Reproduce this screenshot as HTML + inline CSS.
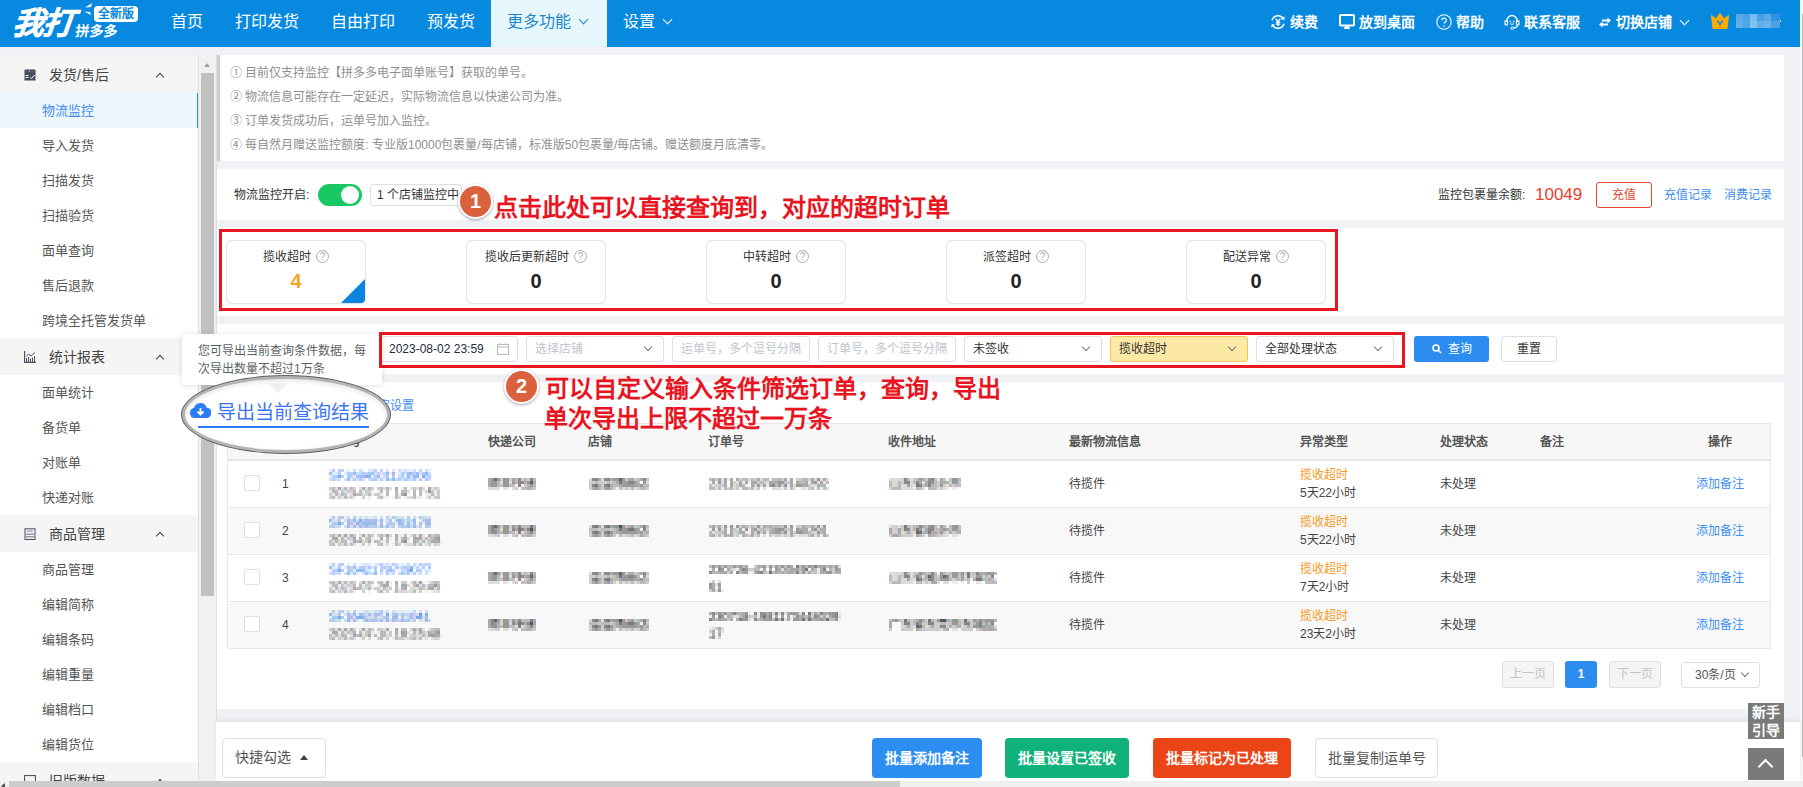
<!DOCTYPE html>
<html lang="zh-CN">
<head>
<meta charset="utf-8">
<style>
*{box-sizing:border-box;margin:0;padding:0}
html,body{width:1803px;height:787px;overflow:hidden}
body{position:relative;background:#eff1f4;font-family:"Liberation Sans",sans-serif;color:#333;font-size:13px;line-height:1}
.a{position:absolute}
.hdr{left:0;top:0;width:1800px;height:47px;background:#0689df}
.nav{top:0;height:47px;line-height:44px;color:#fff;font-size:16px;white-space:nowrap}
.nav.on{background:#e5f7fd;color:#1f86cc}
.chev{display:inline-block;width:7px;height:7px;border-right:1.7px solid currentColor;border-bottom:1.7px solid currentColor;transform:rotate(45deg);position:relative;top:-4px;margin-left:9px}
.rt{top:0;height:47px;line-height:44px;color:#fff;font-size:14px;font-weight:bold;white-space:nowrap}
.side{left:0;top:56px;width:199px;height:725px;background:#fff;overflow:hidden}
.sec{position:absolute;left:0;width:198px;height:37px;background:#f5f5f5;font-size:14px;color:#444;line-height:37px}
.sec .t{position:absolute;left:49px;top:1px}
.sec .up{position:absolute;left:157px;top:18px;width:6px;height:6px;border-left:1.5px solid #444;border-top:1.5px solid #444;transform:rotate(45deg)}
.sec .ic{position:absolute;left:24px;top:13px;width:12px;height:12px}
.it{position:absolute;left:0;width:198px;height:35px;line-height:35px;font-size:13px;color:#555;padding-left:42px}
.it.on{background:#eef7fe;color:#3d8ef0;width:199px;border-right:2px solid #2d8cf0}
.note{left:217px;top:55px;width:1567px;height:106px;background:#fff;border-left:3px solid #cdcdcd}
.note div{position:absolute;left:10px;font-size:12px;color:#8f8f8f;white-space:nowrap;line-height:18px}
.panel{left:217px;background:#fff;width:1567px}
.red{border:3px solid #e8161f}
.card{position:absolute;top:240px;width:140px;height:64px;border:1px solid #e4e4e4;border-radius:5px;background:#fff;overflow:hidden}
.card .tt{position:absolute;left:0;width:100%;top:8px;text-align:center;font-size:12px;color:#333;line-height:16px}
.q{display:inline-block;width:13px;height:13px;border:1px solid #a8adb5;border-radius:50%;font-size:10px;line-height:11px;text-align:center;color:#a8adb5;vertical-align:0px;margin-left:5px;position:relative;top:-1px}
.card .num{position:absolute;left:0;width:100%;top:30px;text-align:center;font-size:20px;font-weight:bold;color:#222;line-height:20px}
.inp{position:absolute;top:336px;width:138px;height:26px;border:1px solid #dcdfe6;border-radius:3px;background:#fff;font-size:12px;line-height:25px;padding-left:8px;color:#333;white-space:nowrap;overflow:hidden}
.inp.ph{color:#c0c4cc}
.dd{position:absolute;right:12px;top:7px;width:6px;height:6px;border-right:1.3px solid #777;border-bottom:1.3px solid #777;transform:rotate(45deg)}
.badge{position:absolute;width:35px;height:35px;border-radius:50%;background:#d9623c;border:2px solid #fff;box-shadow:0 1px 3px rgba(0,0,0,.35);color:#fff;font-weight:bold;font-size:20px;text-align:center;line-height:31px}
.ann{position:absolute;color:#e8151f;font-weight:bold;font-size:24px;white-space:nowrap;line-height:30px}
.th{position:absolute;top:434px;font-size:12px;font-weight:bold;color:#555;line-height:16px;white-space:nowrap}
.row{position:absolute;left:227px;width:1544px;height:47px;border-top:1px solid #e8e8e8}
.cell{position:absolute;font-size:12px;color:#444;line-height:16px;white-space:nowrap}
.blur{filter:blur(0.9px);opacity:.9}
.btn{position:absolute;top:738px;height:40px;border-radius:4px;color:#fff;font-size:14px;font-weight:bold;text-align:center;line-height:40px;white-space:nowrap}
</style>
</head>
<body>
<!-- header -->
<div class="a hdr"></div>
<div class="a" style="left:1800px;top:0;width:3px;height:787px;background:#fafafa"></div>
<div class="a" style="left:1802px;top:14px;width:1px;height:743px;background:#b8b8b8"></div>
<!-- logo -->
<div class="a" style="left:13px;top:8px;font-size:31px;font-weight:900;font-style:italic;color:#fff;line-height:32px;letter-spacing:-1px;transform:skewX(-6deg);-webkit-text-stroke:0.7px #fff">我打</div>
<div class="a" style="left:75px;top:24px;font-size:14px;font-weight:900;color:#fff;line-height:15px;transform:skewX(-6deg)">拼多多</div>
<svg class="a" style="left:83px;top:3px" width="9" height="13" viewBox="0 0 9 13"><path d="M9 0L2 4.5 8 4z" fill="#fff"/><path d="M1 8.5l7 3.5-1-3z" fill="#fff"/></svg>
<div class="a" style="left:94px;top:6px;width:44px;height:16px;background:#fff;border-radius:4px;color:#0689df;font-size:12px;font-weight:bold;line-height:16px;text-align:center">全新版</div>

<div class="a nav" style="left:155px;width:64px;text-align:center">首页</div>
<div class="a nav" style="left:219px;width:96px;text-align:center">打印发货</div>
<div class="a nav" style="left:315px;width:96px;text-align:center">自由打印</div>
<div class="a nav" style="left:411px;width:80px;text-align:center">预发货</div>
<div class="a nav on" style="left:491px;width:116px;padding-left:16px">更多功能<span class="chev"></span></div>
<div class="a nav" style="left:607px;width:90px;padding-left:16px">设置<span class="chev"></span></div>

<div class="a rt" style="left:1270px">
<svg width="16" height="16" viewBox="0 0 16 16" style="vertical-align:-3px"><path d="M2 6.2A6.3 6.3 0 0 1 13.6 5" fill="none" stroke="#fff" stroke-width="1.5"/><path d="M14 9.8A6.3 6.3 0 0 1 2.4 11" fill="none" stroke="#fff" stroke-width="1.5"/><path d="M14.8 2.6l-0.6 3.6-3.4-1.2z" fill="#fff"/><path d="M1.2 13.4l0.6-3.6 3.4 1.2z" fill="#fff"/><path d="M5.6 4.6L8 7.6 10.4 4.6M8 7.6V12M5.8 8.3h4.4M5.8 10.2h4.4" fill="none" stroke="#fff" stroke-width="1.3"/></svg> 续费</div>
<div class="a rt" style="left:1339px">
<svg width="16" height="16" viewBox="0 0 16 16" style="vertical-align:-3px"><rect x="1" y="1" width="14" height="10.5" rx="1" fill="none" stroke="#fff" stroke-width="2"/><path d="M6 12h4l1 3H5z" fill="#fff"/></svg> 放到桌面</div>
<div class="a rt" style="left:1436px">
<svg width="16" height="16" viewBox="0 0 16 16" style="vertical-align:-3px"><circle cx="8" cy="8" r="7.2" fill="none" stroke="#fff" stroke-width="1.1"/><path d="M5.8 6.2a2.2 2.2 0 1 1 3.2 2c-0.7 0.4-1 0.8-1 1.6" fill="none" stroke="#fff" stroke-width="1.2"/><circle cx="8" cy="12" r="0.8" fill="#fff"/></svg> 帮助</div>
<div class="a rt" style="left:1504px">
<svg width="16" height="16" viewBox="0 0 16 16" style="vertical-align:-3px"><path d="M3 8V6.5a5 5 0 0 1 10 0V8" fill="none" stroke="#fff" stroke-width="1.4"/><rect x="1" y="6.5" width="2.5" height="4.5" rx="1" fill="none" stroke="#fff" stroke-width="1.2"/><rect x="12.5" y="6.5" width="2.5" height="4.5" rx="1" fill="none" stroke="#fff" stroke-width="1.2"/><circle cx="6.3" cy="7.5" r="0.8" fill="#fff"/><circle cx="9.7" cy="7.5" r="0.8" fill="#fff"/><path d="M6 9.6q2 1.6 4 0" fill="none" stroke="#fff" stroke-width="1"/><path d="M13.5 11q0 2.5-4 3" fill="none" stroke="#fff" stroke-width="1.2"/><circle cx="8.3" cy="14.2" r="1.3" fill="none" stroke="#fff" stroke-width="1"/></svg> 联系客服</div>
<div class="a rt" style="left:1598px">
<svg width="14" height="14" viewBox="0 0 14 14" style="vertical-align:-2px"><path d="M4 5.5h6.5" fill="none" stroke="#fff" stroke-width="2"/><path d="M9.5 2.5l3.5 3-3.5 3z" fill="#fff"/><path d="M10 9.5H3.5" fill="none" stroke="#fff" stroke-width="2"/><path d="M4.5 6.5L1 9.5l3.5 3z" fill="#fff"/></svg> 切换店铺<span class="chev" style="margin-left:9px;top:-3px"></span></div>
<svg class="a" style="left:1711px;top:13px" width="18" height="16" viewBox="0 0 18 16"><path d="M0.5 2.5L5 6 9 0.5 13 6 17.5 2.5 16 15.5H2z" fill="#ffab00" stroke="#ffab00" stroke-linejoin="round"/><path d="M6.2 7.5L9 11.5 11.8 7.5" fill="none" stroke="#2b8ad8" stroke-width="1.6"/></svg>
<svg class="a" style="left:1736px;top:14px" width="46" height="14" viewBox="0 0 46 14" shape-rendering="crispEdges"><rect x="0" y="0" width="7" height="7" fill="#5aaae9"/><rect x="7" y="0" width="7" height="7" fill="#4aa3e6"/><rect x="14" y="0" width="7" height="7" fill="#78bdee"/><rect x="21" y="0" width="7" height="7" fill="#44a0e5"/><rect x="28" y="0" width="7" height="7" fill="#58a9e8"/><rect x="35" y="0" width="9" height="7" fill="#2e94e2"/><rect x="0" y="7" width="7" height="7" fill="#66b0ea"/><rect x="7" y="7" width="7" height="7" fill="#4ea6e7"/><rect x="14" y="7" width="7" height="7" fill="#82c2ef"/><rect x="21" y="7" width="7" height="7" fill="#62afea"/><rect x="28" y="7" width="7" height="7" fill="#6ab3eb"/><rect x="35" y="7" width="9" height="7" fill="#4aa3e6"/><rect x="-9" y="0" width="7" height="14" fill="#1f8fe0" opacity=".5"/><path d="M44 5.5l2 1.5-2 1.5z" fill="#fff"/></svg>

<!-- sidebar -->
<div class="a side">
  <div class="sec" style="top:0"><svg class="ic" viewBox="0 0 12 12"><path d="M0.5 1.5Q0.5 0.5 1.5 0.5H10.5Q11.5 0.5 11.5 1.5V11.5H0.5z" fill="#454b5c"/><path d="M0.5 2.8H11.5" stroke="#6b7080" stroke-width="0.8"/><path d="M5.5 0.5v2.3" stroke="#9aa" stroke-width="0.8"/><path d="M1.5 6.5h3M1.5 8.5h3" stroke="#fff" stroke-width="1"/><path d="M6.3 8.3l1.3 1.2 3-3.5" fill="none" stroke="#fff" stroke-width="1"/></svg><span class="t">发货/售后</span><span class="up"></span></div>
  <div class="it on" style="top:37px">物流监控</div>
  <div class="it" style="top:72px">导入发货</div>
  <div class="it" style="top:107px">扫描发货</div>
  <div class="it" style="top:142px">扫描验货</div>
  <div class="it" style="top:177px">面单查询</div>
  <div class="it" style="top:212px">售后退款</div>
  <div class="it" style="top:247px">跨境全托管发货单</div>
  <div class="sec" style="top:282px"><svg class="ic" viewBox="0 0 12 12"><path d="M0.6 0v11.4H12" fill="none" stroke="#4a4f60" stroke-width="1.1"/><path d="M2.5 11V7M4.5 11V6M6.5 11V7.5M8.5 11V6.5M10.5 11V5" stroke="#4a4f60" stroke-width="1"/><path d="M2 5.5L4.5 3 7 5 11 1.5" fill="none" stroke="#4a4f60" stroke-width="1"/></svg><span class="t">统计报表</span><span class="up"></span></div>
  <div class="it" style="top:319px">面单统计</div>
  <div class="it" style="top:354px">备货单</div>
  <div class="it" style="top:389px">对账单</div>
  <div class="it" style="top:424px">快递对账</div>
  <div class="sec" style="top:459px"><svg class="ic" viewBox="0 0 12 12"><rect x="1" y="0.8" width="10" height="10.7" fill="none" stroke="#4a4f60" stroke-width="1"/><rect x="3.3" y="2.3" width="5.4" height="1.6" fill="#aab"/><path d="M3 5.5v1.5M5 5.5v1.5M7 5.5v1.5M9 5.5v1.5M3 8v1.5M5 8v1.5M7 8v1.5M9 8v1.5" stroke="#4a4f60" stroke-width="1.1"/></svg><span class="t">商品管理</span><span class="up"></span></div>
  <div class="it" style="top:496px">商品管理</div>
  <div class="it" style="top:531px">编辑简称</div>
  <div class="it" style="top:566px">编辑条码</div>
  <div class="it" style="top:601px">编辑重量</div>
  <div class="it" style="top:636px">编辑档口</div>
  <div class="it" style="top:671px">编辑货位</div>
  <div class="sec" style="top:706px"><svg class="ic" viewBox="0 0 11 11"><rect x="0.5" y="0.5" width="10" height="10" fill="none" stroke="#555"/></svg><span class="t">旧版数据</span><span class="up"></span></div>
</div>
<div class="a" style="left:198px;top:55px;width:1px;height:726px;background:#e2e2e2"></div>
<!-- sidebar scrollbar -->
<div class="a" style="left:199px;top:55px;width:17px;height:726px;background:#f1f1f1"></div>
<div class="a" style="left:204px;top:63px;width:0;height:0;border-left:3.5px solid transparent;border-right:3.5px solid transparent;border-bottom:4px solid #a3a3a3"></div>
<div class="a" style="left:201px;top:73px;width:13px;height:523px;background:#c1c1c1"></div>
<div class="a" style="left:216px;top:55px;width:1px;height:726px;background:#e0e0e0"></div>

<!-- notice -->
<div class="a note">
  <div style="top:9px">① 目前仅支持监控【拼多多电子面单账号】获取的单号。</div>
  <div style="top:33px">② 物流信息可能存在一定延迟，实际物流信息以快递公司为准。</div>
  <div style="top:57px">③ 订单发货成功后，运单号加入监控。</div>
  <div style="top:81px">④ 每自然月赠送监控额度: 专业版10000包裹量/每店铺，标准版50包裹量/每店铺。赠送额度月底清零。</div>
</div>

<!-- toggle row -->
<div class="a panel" style="top:169px;height:51px"></div>
<div class="a" style="left:234px;top:187px;font-size:12px;line-height:16px;color:#333">物流监控开启:</div>
<div class="a" style="left:318px;top:184px;width:44px;height:22px;border-radius:11px;background:#19c865"></div>
<div class="a" style="left:341px;top:186px;width:18px;height:18px;border-radius:50%;background:#fff"></div>
<div class="a" style="left:370px;top:184px;width:92px;height:22px;border:1px solid #dcdfe6;border-radius:3px;font-size:12px;line-height:20px;padding-left:6px;color:#333;white-space:nowrap;background:#fff">1 个店铺监控中</div>
<div class="a" style="left:1438px;top:187px;font-size:12px;line-height:16px;color:#333">监控包裹量余额:</div>
<div class="a" style="left:1535px;top:185px;font-size:17px;line-height:20px;color:#e8402a">10049</div>
<div class="a" style="left:1596px;top:182px;width:56px;height:26px;border:1px solid #e04a2a;border-radius:3px;color:#e04a2a;font-size:12px;line-height:24px;text-align:center">充值</div>
<div class="a" style="left:1664px;top:187px;font-size:12px;line-height:16px;color:#3d8ef0">充值记录</div>
<div class="a" style="left:1724px;top:187px;font-size:12px;line-height:16px;color:#3d8ef0">消费记录</div>

<!-- stats -->
<div class="a panel" style="top:228px;height:88px"></div>
<div class="a red" style="left:219px;top:229px;width:1119px;height:82px"></div>
<div class="card" style="left:226px"><div class="tt">揽收超时<span class="q">?</span></div><div class="num" style="color:#f5a623">4</div><div class="a" style="right:0;bottom:0;width:0;height:0;border-left:24px solid transparent;border-bottom:24px solid #0a84df"></div></div>
<div class="card" style="left:466px"><div class="tt">揽收后更新超时<span class="q">?</span></div><div class="num">0</div></div>
<div class="card" style="left:706px"><div class="tt">中转超时<span class="q">?</span></div><div class="num">0</div></div>
<div class="card" style="left:946px"><div class="tt">派签超时<span class="q">?</span></div><div class="num">0</div></div>
<div class="card" style="left:1186px"><div class="tt">配送异常<span class="q">?</span></div><div class="num">0</div></div>

<!-- search -->
<div class="a panel" style="top:324px;height:50px"></div>
<div class="inp" style="left:380px;color:#1f2d3d">2023-08-02 23:59<svg class="a" style="left:116px;top:6px" width="12" height="12" viewBox="0 0 12 12"><rect x="0.5" y="1.5" width="11" height="10" fill="none" stroke="#b4b9c4"/><path d="M0.5 4h11M3 0v2M9 0v2" stroke="#b4b9c4"/></svg></div>
<div class="inp ph" style="left:526px">选择店铺<span class="dd"></span></div>
<div class="inp ph" style="left:672px">运单号，多个逗号分隔</div>
<div class="inp ph" style="left:818px">订单号，多个逗号分隔</div>
<div class="inp" style="left:964px">未签收<span class="dd"></span></div>
<div class="inp" style="left:1110px;background:#fde9a6;border-color:#f3c35a">揽收超时<span class="dd"></span></div>
<div class="inp" style="left:1256px">全部处理状态<span class="dd"></span></div>
<div class="a red" style="left:379px;top:332px;width:1026px;height:36px"></div>
<div class="a" style="left:1414px;top:336px;width:75px;height:26px;background:#2d8cf0;border-radius:3px;color:#fff;font-size:12px;line-height:26px;text-align:center"><svg width="10" height="10" viewBox="0 0 10 10" style="vertical-align:-1px;margin-right:6px"><circle cx="4" cy="4" r="3" fill="none" stroke="#fff" stroke-width="1.6"/><path d="M6.2 6.2L9 9" stroke="#fff" stroke-width="1.6"/></svg>查询</div>
<div class="a" style="left:1501px;top:336px;width:56px;height:26px;border:1px solid #dcdfe6;border-radius:3px;color:#333;font-size:12px;line-height:24px;text-align:center;background:#fff">重置</div>

<!-- table panel -->
<div class="a panel" style="top:382px;height:327px"></div>
<div class="a" style="left:378px;top:398px;font-size:12px;line-height:16px;color:#3d8ef0">定设置</div>
<div class="a" style="left:227px;top:423px;width:1544px;height:37px;background:#f7f7f7;border:1px solid #e6e6e6"></div>
<div class="th" style="left:325px">运单号</div>
<div class="th" style="left:488px">快递公司</div>
<div class="th" style="left:588px">店铺</div>
<div class="th" style="left:708px">订单号</div>
<div class="th" style="left:888px">收件地址</div>
<div class="th" style="left:1069px">最新物流信息</div>
<div class="th" style="left:1300px">异常类型</div>
<div class="th" style="left:1440px">处理状态</div>
<div class="th" style="left:1540px">备注</div>
<div class="th" style="left:1708px">操作</div>

<div id="rows">
<div class="row" style="top:460px;background:#fff"></div>
<div class="a" style="left:244px;top:475px;width:16px;height:16px;border:1px solid #dcdfe6;border-radius:2px;background:#fff"></div>
<div class="cell" style="left:282px;top:476px;font-size:12px">1</div>
<div class="cell" style="left:1069px;top:476px">待揽件</div>
<div class="cell" style="left:1300px;top:467px;color:#f59a23">揽收超时</div>
<div class="cell" style="left:1300px;top:485px">5天22小时</div>
<div class="cell" style="left:1440px;top:476px">未处理</div>
<div class="cell" style="left:1696px;top:476px;color:#3d8ef0">添加备注</div>
<div class="row" style="top:507px;background:#f8f8f8"></div>
<div class="a" style="left:244px;top:522px;width:16px;height:16px;border:1px solid #dcdfe6;border-radius:2px;background:#fff"></div>
<div class="cell" style="left:282px;top:523px;font-size:12px">2</div>
<div class="cell" style="left:1069px;top:523px">待揽件</div>
<div class="cell" style="left:1300px;top:514px;color:#f59a23">揽收超时</div>
<div class="cell" style="left:1300px;top:532px">5天22小时</div>
<div class="cell" style="left:1440px;top:523px">未处理</div>
<div class="cell" style="left:1696px;top:523px;color:#3d8ef0">添加备注</div>
<div class="row" style="top:554px;background:#fff"></div>
<div class="a" style="left:244px;top:569px;width:16px;height:16px;border:1px solid #dcdfe6;border-radius:2px;background:#fff"></div>
<div class="cell" style="left:282px;top:570px;font-size:12px">3</div>
<div class="cell" style="left:1069px;top:570px">待揽件</div>
<div class="cell" style="left:1300px;top:561px;color:#f59a23">揽收超时</div>
<div class="cell" style="left:1300px;top:579px">7天2小时</div>
<div class="cell" style="left:1440px;top:570px">未处理</div>
<div class="cell" style="left:1696px;top:570px;color:#3d8ef0">添加备注</div>
<div class="row" style="top:601px;background:#f8f8f8"></div>
<div class="a" style="left:244px;top:616px;width:16px;height:16px;border:1px solid #dcdfe6;border-radius:2px;background:#fff"></div>
<div class="cell" style="left:282px;top:617px;font-size:12px">4</div>
<div class="cell" style="left:1069px;top:617px">待揽件</div>
<div class="cell" style="left:1300px;top:608px;color:#f59a23">揽收超时</div>
<div class="cell" style="left:1300px;top:626px">23天2小时</div>
<div class="cell" style="left:1440px;top:617px">未处理</div>
<div class="cell" style="left:1696px;top:617px;color:#3d8ef0">添加备注</div>
<div class="a" style="left:227px;top:648px;width:1544px;height:1px;background:#e8e8e8"></div>
<svg class="a" style="left:320px;top:460px" width="700" height="190" shape-rendering="crispEdges"><path fill="#eef" d="M9 9h3v3h-3zM42 9h3v3h-3zM81 9h3v3h-3zM90 9h3v3h-3zM108 9h3v3h-3zM69 12h3v3h-3zM9 15h3v3h-3zM63 18h3v3h-3zM96 18h3v3h-3zM102 18h3v3h-3zM36 56h3v3h-3zM57 62h3v3h-3zM9 103h3v3h-3zM69 103h3v3h-3zM78 103h3v3h-3zM84 103h3v3h-3zM96 103h3v3h-3zM99 106h3v3h-3zM9 109h3v3h-3zM63 109h3v3h-3zM90 112h3v3h-3zM96 112h3v3h-3zM36 150h3v3h-3z"/><path fill="#bcf" d="M12 9h3v3h-3zM18 9h3v3h-3zM21 9h3v3h-3zM54 9h3v3h-3zM57 12h3v3h-3zM93 12h3v3h-3zM12 15h3v3h-3zM21 15h3v3h-3zM54 15h3v3h-3zM66 15h3v3h-3zM12 18h3v3h-3zM51 18h3v3h-3zM60 18h3v3h-3zM87 18h3v3h-3zM99 18h3v3h-3zM12 103h3v3h-3zM18 103h3v3h-3zM21 103h3v3h-3zM60 103h3v3h-3zM72 103h3v3h-3zM99 103h3v3h-3zM105 103h3v3h-3zM63 106h3v3h-3zM102 106h3v3h-3zM12 109h3v3h-3zM21 109h3v3h-3zM72 109h3v3h-3zM99 109h3v3h-3zM12 112h3v3h-3zM93 112h3v3h-3z"/><path fill="#eff" d="M15 9h3v3h-3zM24 9h3v3h-3zM36 9h3v3h-3zM78 30h3v3h-3zM87 33h3v3h-3zM15 103h3v3h-3zM24 103h3v3h-3zM36 103h3v3h-3zM75 109h3v3h-3zM93 109h3v3h-3zM102 109h3v3h-3zM57 112h3v3h-3zM108 112h3v3h-3zM78 124h3v3h-3z"/><path fill="#def" d="M27 9h3v3h-3zM48 9h3v3h-3zM87 9h3v3h-3zM12 12h3v3h-3zM15 12h3v3h-3zM24 12h3v3h-3zM78 12h3v3h-3zM33 15h3v3h-3zM51 15h3v3h-3zM84 15h3v3h-3zM30 18h3v3h-3zM57 18h3v3h-3zM75 62h3v3h-3zM27 103h3v3h-3zM42 103h3v3h-3zM48 103h3v3h-3zM54 103h3v3h-3zM63 103h3v3h-3zM81 103h3v3h-3zM12 106h3v3h-3zM15 106h3v3h-3zM24 106h3v3h-3zM36 106h3v3h-3zM93 106h3v3h-3zM33 109h3v3h-3zM30 112h3v3h-3zM36 112h3v3h-3zM69 112h3v3h-3zM63 150h3v3h-3zM87 150h3v3h-3z"/><path fill="#cdf" d="M33 9h3v3h-3zM39 9h3v3h-3zM78 9h3v3h-3zM93 9h3v3h-3zM105 9h3v3h-3zM36 12h3v3h-3zM54 12h3v3h-3zM84 12h3v3h-3zM108 12h3v3h-3zM78 15h3v3h-3zM90 15h3v3h-3zM9 18h3v3h-3zM15 18h3v3h-3zM18 18h3v3h-3zM42 18h3v3h-3zM48 18h3v3h-3zM75 18h3v3h-3zM81 18h3v3h-3zM90 18h3v3h-3zM108 18h3v3h-3zM33 103h3v3h-3zM66 103h3v3h-3zM75 103h3v3h-3zM102 103h3v3h-3zM45 109h3v3h-3zM84 109h3v3h-3zM9 112h3v3h-3zM15 112h3v3h-3zM18 112h3v3h-3zM42 112h3v3h-3zM51 112h3v3h-3zM60 112h3v3h-3zM72 112h3v3h-3zM78 112h3v3h-3zM84 112h3v3h-3zM99 112h3v3h-3zM105 112h3v3h-3z"/><path fill="#ddf" d="M51 9h3v3h-3zM66 9h3v3h-3zM72 9h3v3h-3zM84 9h3v3h-3zM60 12h3v3h-3zM99 12h3v3h-3zM24 18h3v3h-3zM36 18h3v3h-3zM45 103h3v3h-3zM57 103h3v3h-3zM45 106h3v3h-3zM51 106h3v3h-3zM78 106h3v3h-3zM105 109h3v3h-3zM24 112h3v3h-3z"/><path fill="#bdf" d="M60 9h3v3h-3zM99 9h3v3h-3zM39 12h3v3h-3zM63 12h3v3h-3zM63 15h3v3h-3zM105 15h3v3h-3zM69 18h3v3h-3zM87 103h3v3h-3zM93 103h3v3h-3zM108 103h3v3h-3zM66 106h3v3h-3zM96 106h3v3h-3zM81 109h3v3h-3zM48 112h3v3h-3z"/><path fill="#abe" d="M9 12h3v3h-3zM51 12h3v3h-3zM90 12h3v3h-3zM36 15h3v3h-3zM42 15h3v3h-3zM27 59h3v3h-3zM45 59h3v3h-3zM48 59h3v3h-3zM51 59h3v3h-3zM54 59h3v3h-3zM105 59h3v3h-3zM108 59h3v3h-3zM27 62h3v3h-3zM51 62h3v3h-3zM60 62h3v3h-3zM81 62h3v3h-3zM93 62h3v3h-3zM99 62h3v3h-3zM33 65h3v3h-3zM39 65h3v3h-3zM45 65h3v3h-3zM66 65h3v3h-3zM87 65h3v3h-3zM9 106h3v3h-3zM87 109h3v3h-3zM27 153h3v3h-3zM39 153h3v3h-3zM48 153h3v3h-3zM54 153h3v3h-3zM57 153h3v3h-3zM75 153h3v3h-3zM90 153h3v3h-3zM27 156h3v3h-3zM66 156h3v3h-3zM90 156h3v3h-3zM105 156h3v3h-3zM33 159h3v3h-3zM51 159h3v3h-3zM60 159h3v3h-3zM72 159h3v3h-3z"/><path fill="#acf" d="M18 12h3v3h-3zM27 12h3v3h-3zM42 12h3v3h-3zM81 12h3v3h-3zM102 12h3v3h-3zM15 15h3v3h-3zM27 15h3v3h-3zM72 15h3v3h-3zM81 15h3v3h-3zM108 15h3v3h-3zM33 18h3v3h-3zM39 18h3v3h-3zM54 18h3v3h-3zM78 18h3v3h-3zM84 18h3v3h-3zM93 18h3v3h-3zM105 18h3v3h-3zM18 106h3v3h-3zM27 106h3v3h-3zM42 106h3v3h-3zM48 106h3v3h-3zM54 106h3v3h-3zM69 106h3v3h-3zM75 106h3v3h-3zM108 106h3v3h-3zM15 109h3v3h-3zM27 109h3v3h-3zM54 109h3v3h-3zM60 109h3v3h-3zM66 109h3v3h-3zM96 109h3v3h-3zM33 112h3v3h-3zM66 112h3v3h-3zM87 112h3v3h-3z"/><path fill="#ccf" d="M30 12h3v3h-3zM45 12h3v3h-3zM30 106h3v3h-3zM60 106h3v3h-3zM87 106h3v3h-3z"/><path fill="#9bf" d="M33 12h3v3h-3zM87 12h3v3h-3zM96 12h3v3h-3zM39 15h3v3h-3zM57 15h3v3h-3zM87 15h3v3h-3zM27 18h3v3h-3zM66 18h3v3h-3zM72 18h3v3h-3zM33 106h3v3h-3zM42 109h3v3h-3zM69 109h3v3h-3zM27 112h3v3h-3zM54 112h3v3h-3z"/><path fill="#9cf" d="M48 12h3v3h-3zM81 112h3v3h-3z"/><path fill="#9be" d="M66 12h3v3h-3zM72 12h3v3h-3zM93 15h3v3h-3zM9 59h3v3h-3zM33 59h3v3h-3zM60 59h3v3h-3zM93 59h3v3h-3zM42 62h3v3h-3zM45 62h3v3h-3zM48 62h3v3h-3zM54 62h3v3h-3zM78 62h3v3h-3zM87 62h3v3h-3zM105 62h3v3h-3zM108 62h3v3h-3zM27 65h3v3h-3zM60 65h3v3h-3zM93 65h3v3h-3zM36 109h3v3h-3zM9 153h3v3h-3zM33 153h3v3h-3zM72 156h3v3h-3zM75 156h3v3h-3zM27 159h3v3h-3zM45 159h3v3h-3zM66 159h3v3h-3zM81 159h3v3h-3zM105 159h3v3h-3z"/><path fill="#fef" d="M75 12h3v3h-3zM60 15h3v3h-3zM99 15h3v3h-3zM39 103h3v3h-3zM51 103h3v3h-3zM78 109h3v3h-3zM63 112h3v3h-3z"/><path fill="#8bf" d="M105 12h3v3h-3z"/><path fill="#8ae" d="M18 15h3v3h-3zM45 15h3v3h-3zM102 15h3v3h-3zM39 59h3v3h-3zM18 109h3v3h-3zM66 153h3v3h-3zM105 153h3v3h-3zM36 156h3v3h-3zM39 156h3v3h-3zM99 156h3v3h-3z"/><path fill="#bce" d="M30 15h3v3h-3zM12 56h3v3h-3zM18 56h3v3h-3zM33 56h3v3h-3zM66 56h3v3h-3zM87 56h3v3h-3zM42 59h3v3h-3zM87 59h3v3h-3zM66 62h3v3h-3zM72 62h3v3h-3zM9 65h3v3h-3zM42 65h3v3h-3zM48 65h3v3h-3zM51 65h3v3h-3zM72 65h3v3h-3zM84 65h3v3h-3zM99 65h3v3h-3zM108 65h3v3h-3zM39 106h3v3h-3zM30 109h3v3h-3zM12 150h3v3h-3zM18 150h3v3h-3zM33 150h3v3h-3zM60 153h3v3h-3zM9 159h3v3h-3zM48 159h3v3h-3zM75 159h3v3h-3zM84 159h3v3h-3zM93 159h3v3h-3z"/><path fill="#8be" d="M48 15h3v3h-3zM96 15h3v3h-3zM90 106h3v3h-3zM39 109h3v3h-3zM42 156h3v3h-3z"/><path fill="#ccc" d="M9 27h3v3h-3zM51 27h3v3h-3zM57 27h3v3h-3zM114 27h3v3h-3zM27 30h3v3h-3zM45 30h3v3h-3zM111 30h3v3h-3zM117 30h3v3h-3zM9 33h3v3h-3zM54 33h3v3h-3zM57 33h3v3h-3zM117 33h3v3h-3zM9 36h3v3h-3zM30 36h3v3h-3zM57 36h3v3h-3zM108 36h3v3h-3zM114 36h3v3h-3zM180 18h3v3h-3zM189 18h3v3h-3zM201 18h3v3h-3zM207 18h3v3h-3zM195 27h3v3h-3zM213 27h3v3h-3zM314 18h3v3h-3zM269 21h3v3h-3zM272 21h3v3h-3zM278 21h3v3h-3zM281 21h3v3h-3zM284 21h3v3h-3zM290 21h3v3h-3zM269 24h3v3h-3zM281 24h3v3h-3zM269 27h3v3h-3zM281 27h3v3h-3zM305 27h3v3h-3zM317 27h3v3h-3zM326 27h3v3h-3zM395 18h3v3h-3zM434 18h3v3h-3zM461 18h3v3h-3zM479 18h3v3h-3zM488 18h3v3h-3zM437 21h3v3h-3zM398 24h3v3h-3zM401 24h3v3h-3zM416 24h3v3h-3zM461 24h3v3h-3zM488 24h3v3h-3zM407 27h3v3h-3zM416 27h3v3h-3zM428 27h3v3h-3zM437 27h3v3h-3zM464 27h3v3h-3zM488 27h3v3h-3zM581 21h3v3h-3zM617 21h3v3h-3zM629 21h3v3h-3zM620 27h3v3h-3zM33 74h3v3h-3zM51 74h3v3h-3zM111 74h3v3h-3zM30 77h3v3h-3zM45 80h3v3h-3zM18 83h3v3h-3zM42 83h3v3h-3zM78 83h3v3h-3zM108 83h3v3h-3zM114 83h3v3h-3zM180 65h3v3h-3zM189 65h3v3h-3zM177 74h3v3h-3zM192 74h3v3h-3zM213 74h3v3h-3zM278 68h3v3h-3zM290 68h3v3h-3zM326 68h3v3h-3zM269 71h3v3h-3zM281 71h3v3h-3zM269 74h3v3h-3zM281 74h3v3h-3zM293 74h3v3h-3zM305 74h3v3h-3zM308 74h3v3h-3zM317 74h3v3h-3zM326 74h3v3h-3zM395 65h3v3h-3zM419 65h3v3h-3zM428 65h3v3h-3zM434 65h3v3h-3zM476 65h3v3h-3zM479 65h3v3h-3zM494 65h3v3h-3zM446 68h3v3h-3zM467 68h3v3h-3zM497 68h3v3h-3zM395 71h3v3h-3zM434 71h3v3h-3zM473 71h3v3h-3zM416 74h3v3h-3zM428 74h3v3h-3zM449 74h3v3h-3zM455 74h3v3h-3zM458 74h3v3h-3zM506 74h3v3h-3zM581 65h3v3h-3zM590 65h3v3h-3zM590 68h3v3h-3zM584 71h3v3h-3zM590 71h3v3h-3zM623 71h3v3h-3zM632 71h3v3h-3zM569 74h3v3h-3zM581 74h3v3h-3zM584 74h3v3h-3zM590 74h3v3h-3zM617 74h3v3h-3zM620 74h3v3h-3zM9 121h3v3h-3zM51 121h3v3h-3zM57 121h3v3h-3zM84 121h3v3h-3zM111 121h3v3h-3zM117 121h3v3h-3zM27 124h3v3h-3zM45 124h3v3h-3zM9 127h3v3h-3zM54 127h3v3h-3zM57 127h3v3h-3zM102 127h3v3h-3zM9 130h3v3h-3zM30 130h3v3h-3zM57 130h3v3h-3zM66 130h3v3h-3zM99 130h3v3h-3zM180 112h3v3h-3zM189 112h3v3h-3zM201 112h3v3h-3zM207 112h3v3h-3zM195 121h3v3h-3zM213 121h3v3h-3zM314 112h3v3h-3zM269 115h3v3h-3zM272 115h3v3h-3zM278 115h3v3h-3zM281 115h3v3h-3zM284 115h3v3h-3zM290 115h3v3h-3zM269 118h3v3h-3zM281 118h3v3h-3zM269 121h3v3h-3zM281 121h3v3h-3zM305 121h3v3h-3zM317 121h3v3h-3zM326 121h3v3h-3zM452 105h3v3h-3zM428 108h3v3h-3zM431 108h3v3h-3zM512 108h3v3h-3zM407 111h3v3h-3zM479 111h3v3h-3zM485 111h3v3h-3zM512 111h3v3h-3zM392 120h3v3h-3zM389 129h3v3h-3zM626 112h3v3h-3zM581 115h3v3h-3zM617 115h3v3h-3zM629 115h3v3h-3zM650 115h3v3h-3zM653 115h3v3h-3zM644 118h3v3h-3zM605 121h3v3h-3zM647 121h3v3h-3zM33 168h3v3h-3zM51 168h3v3h-3zM57 168h3v3h-3zM60 168h3v3h-3zM90 168h3v3h-3zM96 168h3v3h-3zM30 171h3v3h-3zM102 171h3v3h-3zM45 174h3v3h-3zM69 174h3v3h-3zM90 174h3v3h-3zM93 174h3v3h-3zM18 177h3v3h-3zM42 177h3v3h-3zM57 177h3v3h-3zM66 177h3v3h-3zM78 177h3v3h-3zM81 177h3v3h-3zM90 177h3v3h-3zM114 177h3v3h-3zM180 159h3v3h-3zM189 159h3v3h-3zM177 168h3v3h-3zM192 168h3v3h-3zM213 168h3v3h-3zM278 162h3v3h-3zM290 162h3v3h-3zM326 162h3v3h-3zM269 165h3v3h-3zM281 165h3v3h-3zM269 168h3v3h-3zM281 168h3v3h-3zM293 168h3v3h-3zM305 168h3v3h-3zM308 168h3v3h-3zM317 168h3v3h-3zM326 168h3v3h-3zM452 152h3v3h-3zM428 155h3v3h-3zM473 155h3v3h-3zM491 155h3v3h-3zM500 155h3v3h-3zM395 167h3v3h-3zM389 170h3v3h-3zM398 176h3v3h-3zM581 159h3v3h-3zM590 159h3v3h-3zM605 159h3v3h-3zM614 159h3v3h-3zM641 159h3v3h-3zM650 159h3v3h-3zM590 162h3v3h-3zM614 162h3v3h-3zM617 162h3v3h-3zM650 162h3v3h-3zM584 165h3v3h-3zM590 165h3v3h-3zM608 165h3v3h-3zM614 165h3v3h-3zM617 165h3v3h-3zM626 165h3v3h-3zM632 165h3v3h-3zM644 165h3v3h-3zM650 165h3v3h-3zM569 168h3v3h-3zM581 168h3v3h-3zM584 168h3v3h-3zM590 168h3v3h-3zM605 168h3v3h-3zM608 168h3v3h-3zM614 168h3v3h-3zM641 168h3v3h-3zM644 168h3v3h-3zM650 168h3v3h-3zM656 168h3v3h-3z"/><path fill="#bbb" d="M12 27h3v3h-3zM24 27h3v3h-3zM30 27h3v3h-3zM48 27h3v3h-3zM60 27h3v3h-3zM66 27h3v3h-3zM84 27h3v3h-3zM99 27h3v3h-3zM12 30h3v3h-3zM15 30h3v3h-3zM33 30h3v3h-3zM39 30h3v3h-3zM60 30h3v3h-3zM66 30h3v3h-3zM75 30h3v3h-3zM81 30h3v3h-3zM84 30h3v3h-3zM93 30h3v3h-3zM99 30h3v3h-3zM15 33h3v3h-3zM39 33h3v3h-3zM48 33h3v3h-3zM66 33h3v3h-3zM75 33h3v3h-3zM93 33h3v3h-3zM99 33h3v3h-3zM111 33h3v3h-3zM12 36h3v3h-3zM24 36h3v3h-3zM60 36h3v3h-3zM75 36h3v3h-3zM93 36h3v3h-3zM195 18h3v3h-3zM204 18h3v3h-3zM213 18h3v3h-3zM195 21h3v3h-3zM177 24h3v3h-3zM213 24h3v3h-3zM201 27h3v3h-3zM210 27h3v3h-3zM317 18h3v3h-3zM275 21h3v3h-3zM287 21h3v3h-3zM293 21h3v3h-3zM317 21h3v3h-3zM293 24h3v3h-3zM296 24h3v3h-3zM323 24h3v3h-3zM326 24h3v3h-3zM311 27h3v3h-3zM320 27h3v3h-3zM323 27h3v3h-3zM422 18h3v3h-3zM425 18h3v3h-3zM446 18h3v3h-3zM452 18h3v3h-3zM485 18h3v3h-3zM479 21h3v3h-3zM482 21h3v3h-3zM506 21h3v3h-3zM455 24h3v3h-3zM500 24h3v3h-3zM392 27h3v3h-3zM398 27h3v3h-3zM404 27h3v3h-3zM410 27h3v3h-3zM422 27h3v3h-3zM425 27h3v3h-3zM431 27h3v3h-3zM470 27h3v3h-3zM491 27h3v3h-3zM503 27h3v3h-3zM587 18h3v3h-3zM596 18h3v3h-3zM569 21h3v3h-3zM578 21h3v3h-3zM593 21h3v3h-3zM614 21h3v3h-3zM569 24h3v3h-3zM578 24h3v3h-3zM602 24h3v3h-3zM614 24h3v3h-3zM629 24h3v3h-3zM638 24h3v3h-3zM572 27h3v3h-3zM575 27h3v3h-3zM578 27h3v3h-3zM596 27h3v3h-3zM599 27h3v3h-3zM608 27h3v3h-3zM611 27h3v3h-3zM614 27h3v3h-3zM12 74h3v3h-3zM48 74h3v3h-3zM60 74h3v3h-3zM84 74h3v3h-3zM93 74h3v3h-3zM114 74h3v3h-3zM117 74h3v3h-3zM21 77h3v3h-3zM39 77h3v3h-3zM48 77h3v3h-3zM66 77h3v3h-3zM81 77h3v3h-3zM111 77h3v3h-3zM15 80h3v3h-3zM21 80h3v3h-3zM24 80h3v3h-3zM36 80h3v3h-3zM54 80h3v3h-3zM66 80h3v3h-3zM75 80h3v3h-3zM96 80h3v3h-3zM102 80h3v3h-3zM12 83h3v3h-3zM24 83h3v3h-3zM60 83h3v3h-3zM75 83h3v3h-3zM93 83h3v3h-3zM99 83h3v3h-3zM204 65h3v3h-3zM207 65h3v3h-3zM180 71h3v3h-3zM189 71h3v3h-3zM192 71h3v3h-3zM213 71h3v3h-3zM195 74h3v3h-3zM201 74h3v3h-3zM204 74h3v3h-3zM210 74h3v3h-3zM317 65h3v3h-3zM326 65h3v3h-3zM269 68h3v3h-3zM272 68h3v3h-3zM275 68h3v3h-3zM281 68h3v3h-3zM284 68h3v3h-3zM287 68h3v3h-3zM293 68h3v3h-3zM293 71h3v3h-3zM323 71h3v3h-3zM299 74h3v3h-3zM311 74h3v3h-3zM323 74h3v3h-3zM389 65h3v3h-3zM425 65h3v3h-3zM431 65h3v3h-3zM452 65h3v3h-3zM455 65h3v3h-3zM458 65h3v3h-3zM485 65h3v3h-3zM443 68h3v3h-3zM449 68h3v3h-3zM464 68h3v3h-3zM389 71h3v3h-3zM461 71h3v3h-3zM488 71h3v3h-3zM389 74h3v3h-3zM398 74h3v3h-3zM407 74h3v3h-3zM425 74h3v3h-3zM437 74h3v3h-3zM497 74h3v3h-3zM587 65h3v3h-3zM593 65h3v3h-3zM605 65h3v3h-3zM614 65h3v3h-3zM623 65h3v3h-3zM629 65h3v3h-3zM638 65h3v3h-3zM614 68h3v3h-3zM629 68h3v3h-3zM638 68h3v3h-3zM635 71h3v3h-3zM599 74h3v3h-3zM614 74h3v3h-3zM12 121h3v3h-3zM24 121h3v3h-3zM30 121h3v3h-3zM48 121h3v3h-3zM60 121h3v3h-3zM93 121h3v3h-3zM114 121h3v3h-3zM12 124h3v3h-3zM15 124h3v3h-3zM33 124h3v3h-3zM39 124h3v3h-3zM60 124h3v3h-3zM75 124h3v3h-3zM102 124h3v3h-3zM108 124h3v3h-3zM111 124h3v3h-3zM117 124h3v3h-3zM15 127h3v3h-3zM39 127h3v3h-3zM48 127h3v3h-3zM63 127h3v3h-3zM75 127h3v3h-3zM81 127h3v3h-3zM117 127h3v3h-3zM12 130h3v3h-3zM24 130h3v3h-3zM60 130h3v3h-3zM75 130h3v3h-3zM93 130h3v3h-3zM195 112h3v3h-3zM204 112h3v3h-3zM213 112h3v3h-3zM195 115h3v3h-3zM177 118h3v3h-3zM213 118h3v3h-3zM201 121h3v3h-3zM210 121h3v3h-3zM317 112h3v3h-3zM275 115h3v3h-3zM287 115h3v3h-3zM293 115h3v3h-3zM317 115h3v3h-3zM293 118h3v3h-3zM296 118h3v3h-3zM323 118h3v3h-3zM326 118h3v3h-3zM311 121h3v3h-3zM320 121h3v3h-3zM323 121h3v3h-3zM389 105h3v3h-3zM395 105h3v3h-3zM401 105h3v3h-3zM407 105h3v3h-3zM422 105h3v3h-3zM458 105h3v3h-3zM464 105h3v3h-3zM485 105h3v3h-3zM506 105h3v3h-3zM512 105h3v3h-3zM437 108h3v3h-3zM467 108h3v3h-3zM395 111h3v3h-3zM419 111h3v3h-3zM443 111h3v3h-3zM452 111h3v3h-3zM458 111h3v3h-3zM464 111h3v3h-3zM473 111h3v3h-3zM587 112h3v3h-3zM596 112h3v3h-3zM608 112h3v3h-3zM614 112h3v3h-3zM623 112h3v3h-3zM653 112h3v3h-3zM674 112h3v3h-3zM569 115h3v3h-3zM578 115h3v3h-3zM593 115h3v3h-3zM614 115h3v3h-3zM665 115h3v3h-3zM569 118h3v3h-3zM578 118h3v3h-3zM602 118h3v3h-3zM605 118h3v3h-3zM629 118h3v3h-3zM638 118h3v3h-3zM647 118h3v3h-3zM665 118h3v3h-3zM671 118h3v3h-3zM572 121h3v3h-3zM575 121h3v3h-3zM578 121h3v3h-3zM596 121h3v3h-3zM599 121h3v3h-3zM665 121h3v3h-3zM668 121h3v3h-3zM671 121h3v3h-3zM12 168h3v3h-3zM48 168h3v3h-3zM81 168h3v3h-3zM114 168h3v3h-3zM117 168h3v3h-3zM21 171h3v3h-3zM39 171h3v3h-3zM48 171h3v3h-3zM60 171h3v3h-3zM63 171h3v3h-3zM93 171h3v3h-3zM111 171h3v3h-3zM15 174h3v3h-3zM21 174h3v3h-3zM24 174h3v3h-3zM36 174h3v3h-3zM54 174h3v3h-3zM60 174h3v3h-3zM63 174h3v3h-3zM75 174h3v3h-3zM102 174h3v3h-3zM12 177h3v3h-3zM24 177h3v3h-3zM60 177h3v3h-3zM75 177h3v3h-3zM93 177h3v3h-3zM99 177h3v3h-3zM204 159h3v3h-3zM207 159h3v3h-3zM180 165h3v3h-3zM189 165h3v3h-3zM192 165h3v3h-3zM213 165h3v3h-3zM195 168h3v3h-3zM201 168h3v3h-3zM204 168h3v3h-3zM210 168h3v3h-3zM317 159h3v3h-3zM326 159h3v3h-3zM269 162h3v3h-3zM272 162h3v3h-3zM275 162h3v3h-3zM281 162h3v3h-3zM284 162h3v3h-3zM287 162h3v3h-3zM293 162h3v3h-3zM293 165h3v3h-3zM323 165h3v3h-3zM299 168h3v3h-3zM311 168h3v3h-3zM323 168h3v3h-3zM395 152h3v3h-3zM407 152h3v3h-3zM497 152h3v3h-3zM419 155h3v3h-3zM437 158h3v3h-3zM452 158h3v3h-3zM458 158h3v3h-3zM485 158h3v3h-3zM509 158h3v3h-3zM512 158h3v3h-3zM389 176h3v3h-3zM569 159h3v3h-3zM578 159h3v3h-3zM587 159h3v3h-3zM593 159h3v3h-3zM611 159h3v3h-3zM629 159h3v3h-3zM638 159h3v3h-3zM647 159h3v3h-3zM620 162h3v3h-3zM623 162h3v3h-3zM638 162h3v3h-3zM653 162h3v3h-3zM662 162h3v3h-3zM668 162h3v3h-3zM635 165h3v3h-3zM599 168h3v3h-3zM623 168h3v3h-3zM659 168h3v3h-3zM674 168h3v3h-3z"/><path fill="#ddd" d="M15 27h3v3h-3zM21 27h3v3h-3zM27 27h3v3h-3zM39 27h3v3h-3zM45 27h3v3h-3zM63 27h3v3h-3zM69 27h3v3h-3zM96 27h3v3h-3zM111 27h3v3h-3zM117 27h3v3h-3zM24 30h3v3h-3zM87 30h3v3h-3zM18 33h3v3h-3zM30 33h3v3h-3zM42 33h3v3h-3zM27 36h3v3h-3zM78 36h3v3h-3zM87 36h3v3h-3zM90 36h3v3h-3zM180 21h3v3h-3zM189 21h3v3h-3zM168 27h3v3h-3zM171 27h3v3h-3zM174 27h3v3h-3zM177 27h3v3h-3zM269 18h3v3h-3zM281 18h3v3h-3zM326 21h3v3h-3zM302 27h3v3h-3zM314 27h3v3h-3zM401 18h3v3h-3zM440 18h3v3h-3zM500 18h3v3h-3zM506 18h3v3h-3zM401 21h3v3h-3zM416 21h3v3h-3zM392 24h3v3h-3zM491 24h3v3h-3zM494 24h3v3h-3zM395 27h3v3h-3zM413 27h3v3h-3zM443 27h3v3h-3zM452 27h3v3h-3zM455 27h3v3h-3zM458 27h3v3h-3zM473 27h3v3h-3zM482 27h3v3h-3zM569 18h3v3h-3zM578 18h3v3h-3zM590 18h3v3h-3zM590 21h3v3h-3zM602 21h3v3h-3zM581 24h3v3h-3zM584 24h3v3h-3zM626 24h3v3h-3zM581 27h3v3h-3zM587 27h3v3h-3zM590 27h3v3h-3zM602 27h3v3h-3zM617 27h3v3h-3zM21 74h3v3h-3zM27 74h3v3h-3zM39 74h3v3h-3zM45 74h3v3h-3zM90 74h3v3h-3zM24 77h3v3h-3zM87 77h3v3h-3zM102 77h3v3h-3zM12 80h3v3h-3zM30 80h3v3h-3zM60 80h3v3h-3zM99 80h3v3h-3zM105 80h3v3h-3zM21 83h3v3h-3zM27 83h3v3h-3zM33 83h3v3h-3zM48 83h3v3h-3zM66 83h3v3h-3zM84 83h3v3h-3zM87 83h3v3h-3zM195 71h3v3h-3zM168 74h3v3h-3zM183 74h3v3h-3zM186 74h3v3h-3zM401 65h3v3h-3zM500 65h3v3h-3zM401 68h3v3h-3zM392 71h3v3h-3zM467 71h3v3h-3zM395 74h3v3h-3zM401 74h3v3h-3zM434 74h3v3h-3zM443 74h3v3h-3zM461 74h3v3h-3zM467 74h3v3h-3zM479 74h3v3h-3zM482 74h3v3h-3zM485 74h3v3h-3zM494 74h3v3h-3zM569 65h3v3h-3zM578 65h3v3h-3zM617 65h3v3h-3zM593 71h3v3h-3zM623 74h3v3h-3zM632 74h3v3h-3zM15 121h3v3h-3zM21 121h3v3h-3zM27 121h3v3h-3zM39 121h3v3h-3zM45 121h3v3h-3zM90 121h3v3h-3zM96 121h3v3h-3zM24 124h3v3h-3zM87 124h3v3h-3zM99 124h3v3h-3zM18 127h3v3h-3zM30 127h3v3h-3zM42 127h3v3h-3zM66 127h3v3h-3zM93 127h3v3h-3zM96 127h3v3h-3zM105 127h3v3h-3zM114 127h3v3h-3zM27 130h3v3h-3zM78 130h3v3h-3zM84 130h3v3h-3zM87 130h3v3h-3zM114 130h3v3h-3zM117 130h3v3h-3zM180 115h3v3h-3zM189 115h3v3h-3zM168 121h3v3h-3zM171 121h3v3h-3zM174 121h3v3h-3zM177 121h3v3h-3zM269 112h3v3h-3zM281 112h3v3h-3zM326 115h3v3h-3zM302 121h3v3h-3zM314 121h3v3h-3zM446 105h3v3h-3zM518 105h3v3h-3zM398 120h3v3h-3zM395 123h3v3h-3zM395 129h3v3h-3zM569 112h3v3h-3zM578 112h3v3h-3zM590 112h3v3h-3zM590 115h3v3h-3zM602 115h3v3h-3zM644 115h3v3h-3zM581 118h3v3h-3zM584 118h3v3h-3zM581 121h3v3h-3zM587 121h3v3h-3zM590 121h3v3h-3zM602 121h3v3h-3zM608 121h3v3h-3zM617 121h3v3h-3zM623 121h3v3h-3zM626 121h3v3h-3zM21 168h3v3h-3zM27 168h3v3h-3zM39 168h3v3h-3zM45 168h3v3h-3zM63 168h3v3h-3zM108 168h3v3h-3zM24 171h3v3h-3zM87 171h3v3h-3zM96 171h3v3h-3zM105 171h3v3h-3zM12 174h3v3h-3zM30 174h3v3h-3zM96 174h3v3h-3zM105 174h3v3h-3zM21 177h3v3h-3zM27 177h3v3h-3zM33 177h3v3h-3zM48 177h3v3h-3zM84 177h3v3h-3zM87 177h3v3h-3zM96 177h3v3h-3zM111 177h3v3h-3zM195 165h3v3h-3zM168 168h3v3h-3zM183 168h3v3h-3zM186 168h3v3h-3zM458 152h3v3h-3zM464 152h3v3h-3zM479 152h3v3h-3zM413 155h3v3h-3zM416 155h3v3h-3zM506 155h3v3h-3zM518 155h3v3h-3zM464 158h3v3h-3zM392 167h3v3h-3zM401 167h3v3h-3zM593 165h3v3h-3zM674 165h3v3h-3zM620 168h3v3h-3zM632 168h3v3h-3z"/><path fill="#aab" d="M18 27h3v3h-3zM42 27h3v3h-3zM308 18h3v3h-3zM392 18h3v3h-3zM482 24h3v3h-3zM602 18h3v3h-3zM33 77h3v3h-3zM84 77h3v3h-3zM213 65h3v3h-3zM482 68h3v3h-3zM449 71h3v3h-3zM626 68h3v3h-3zM638 71h3v3h-3zM18 121h3v3h-3zM42 121h3v3h-3zM66 121h3v3h-3zM308 112h3v3h-3zM518 111h3v3h-3zM602 112h3v3h-3zM662 112h3v3h-3zM33 171h3v3h-3zM213 159h3v3h-3zM392 170h3v3h-3zM392 173h3v3h-3zM638 165h3v3h-3z"/><path fill="#ccd" d="M33 27h3v3h-3zM18 36h3v3h-3zM42 36h3v3h-3zM419 18h3v3h-3zM467 21h3v3h-3zM108 77h3v3h-3zM174 74h3v3h-3zM440 71h3v3h-3zM491 71h3v3h-3zM575 65h3v3h-3zM575 68h3v3h-3zM602 68h3v3h-3zM575 71h3v3h-3zM587 74h3v3h-3zM602 74h3v3h-3zM33 121h3v3h-3zM69 127h3v3h-3zM18 130h3v3h-3zM42 130h3v3h-3zM662 115h3v3h-3zM174 168h3v3h-3zM431 155h3v3h-3zM602 162h3v3h-3zM626 162h3v3h-3zM587 168h3v3h-3zM602 168h3v3h-3zM611 168h3v3h-3zM647 168h3v3h-3z"/><path fill="#aaa" d="M75 27h3v3h-3zM108 27h3v3h-3zM33 33h3v3h-3zM81 33h3v3h-3zM168 18h3v3h-3zM168 21h3v3h-3zM213 21h3v3h-3zM168 24h3v3h-3zM207 27h3v3h-3zM278 18h3v3h-3zM290 18h3v3h-3zM320 18h3v3h-3zM296 21h3v3h-3zM278 24h3v3h-3zM290 24h3v3h-3zM299 24h3v3h-3zM317 24h3v3h-3zM272 27h3v3h-3zM284 27h3v3h-3zM398 18h3v3h-3zM404 18h3v3h-3zM410 18h3v3h-3zM416 18h3v3h-3zM437 18h3v3h-3zM464 18h3v3h-3zM470 18h3v3h-3zM491 18h3v3h-3zM503 18h3v3h-3zM392 21h3v3h-3zM404 21h3v3h-3zM410 21h3v3h-3zM419 21h3v3h-3zM425 21h3v3h-3zM431 21h3v3h-3zM434 21h3v3h-3zM449 21h3v3h-3zM452 21h3v3h-3zM455 21h3v3h-3zM470 21h3v3h-3zM485 21h3v3h-3zM491 21h3v3h-3zM500 21h3v3h-3zM404 24h3v3h-3zM410 24h3v3h-3zM419 24h3v3h-3zM431 24h3v3h-3zM443 24h3v3h-3zM470 24h3v3h-3zM485 24h3v3h-3zM497 24h3v3h-3zM620 18h3v3h-3zM599 21h3v3h-3zM605 21h3v3h-3zM620 21h3v3h-3zM587 24h3v3h-3zM605 24h3v3h-3zM18 74h3v3h-3zM24 74h3v3h-3zM30 74h3v3h-3zM42 74h3v3h-3zM66 74h3v3h-3zM75 74h3v3h-3zM99 74h3v3h-3zM108 74h3v3h-3zM12 77h3v3h-3zM15 77h3v3h-3zM60 77h3v3h-3zM93 77h3v3h-3zM99 77h3v3h-3zM114 77h3v3h-3zM33 80h3v3h-3zM39 80h3v3h-3zM48 80h3v3h-3zM81 80h3v3h-3zM93 80h3v3h-3zM111 80h3v3h-3zM114 80h3v3h-3zM117 80h3v3h-3zM177 68h3v3h-3zM195 68h3v3h-3zM204 68h3v3h-3zM207 71h3v3h-3zM207 74h3v3h-3zM308 65h3v3h-3zM320 65h3v3h-3zM296 68h3v3h-3zM317 68h3v3h-3zM296 71h3v3h-3zM317 71h3v3h-3zM326 71h3v3h-3zM272 74h3v3h-3zM278 74h3v3h-3zM284 74h3v3h-3zM290 74h3v3h-3zM320 74h3v3h-3zM392 65h3v3h-3zM398 65h3v3h-3zM422 65h3v3h-3zM443 65h3v3h-3zM449 65h3v3h-3zM482 65h3v3h-3zM491 65h3v3h-3zM404 68h3v3h-3zM410 68h3v3h-3zM419 68h3v3h-3zM431 68h3v3h-3zM452 68h3v3h-3zM470 68h3v3h-3zM479 68h3v3h-3zM485 68h3v3h-3zM491 68h3v3h-3zM500 68h3v3h-3zM503 68h3v3h-3zM404 71h3v3h-3zM410 71h3v3h-3zM419 71h3v3h-3zM422 71h3v3h-3zM431 71h3v3h-3zM443 71h3v3h-3zM470 71h3v3h-3zM482 71h3v3h-3zM485 71h3v3h-3zM503 71h3v3h-3zM392 74h3v3h-3zM404 74h3v3h-3zM410 74h3v3h-3zM431 74h3v3h-3zM470 74h3v3h-3zM491 74h3v3h-3zM503 74h3v3h-3zM602 65h3v3h-3zM569 68h3v3h-3zM578 68h3v3h-3zM605 68h3v3h-3zM620 68h3v3h-3zM569 71h3v3h-3zM578 71h3v3h-3zM587 71h3v3h-3zM605 71h3v3h-3zM611 71h3v3h-3zM614 71h3v3h-3zM572 74h3v3h-3zM575 74h3v3h-3zM596 74h3v3h-3zM608 74h3v3h-3zM75 121h3v3h-3zM99 121h3v3h-3zM63 124h3v3h-3zM66 124h3v3h-3zM81 124h3v3h-3zM84 124h3v3h-3zM96 124h3v3h-3zM33 127h3v3h-3zM84 127h3v3h-3zM108 127h3v3h-3zM168 112h3v3h-3zM168 115h3v3h-3zM213 115h3v3h-3zM168 118h3v3h-3zM207 121h3v3h-3zM278 112h3v3h-3zM290 112h3v3h-3zM320 112h3v3h-3zM296 115h3v3h-3zM278 118h3v3h-3zM290 118h3v3h-3zM299 118h3v3h-3zM317 118h3v3h-3zM272 121h3v3h-3zM284 121h3v3h-3zM425 105h3v3h-3zM437 105h3v3h-3zM470 105h3v3h-3zM491 105h3v3h-3zM497 105h3v3h-3zM500 105h3v3h-3zM392 108h3v3h-3zM407 108h3v3h-3zM419 108h3v3h-3zM443 108h3v3h-3zM449 108h3v3h-3zM458 108h3v3h-3zM470 108h3v3h-3zM473 108h3v3h-3zM476 108h3v3h-3zM491 108h3v3h-3zM518 108h3v3h-3zM398 111h3v3h-3zM401 111h3v3h-3zM404 111h3v3h-3zM410 111h3v3h-3zM422 111h3v3h-3zM434 111h3v3h-3zM455 111h3v3h-3zM461 111h3v3h-3zM467 111h3v3h-3zM470 111h3v3h-3zM488 111h3v3h-3zM500 111h3v3h-3zM503 111h3v3h-3zM515 111h3v3h-3zM392 123h3v3h-3zM392 126h3v3h-3zM398 126h3v3h-3zM392 129h3v3h-3zM659 112h3v3h-3zM599 115h3v3h-3zM605 115h3v3h-3zM587 118h3v3h-3zM641 118h3v3h-3zM653 118h3v3h-3zM611 121h3v3h-3zM614 121h3v3h-3zM18 168h3v3h-3zM24 168h3v3h-3zM30 168h3v3h-3zM42 168h3v3h-3zM66 168h3v3h-3zM75 168h3v3h-3zM93 168h3v3h-3zM99 168h3v3h-3zM12 171h3v3h-3zM15 171h3v3h-3zM84 171h3v3h-3zM99 171h3v3h-3zM108 171h3v3h-3zM114 171h3v3h-3zM33 174h3v3h-3zM39 174h3v3h-3zM48 174h3v3h-3zM81 174h3v3h-3zM84 174h3v3h-3zM108 174h3v3h-3zM114 174h3v3h-3zM117 174h3v3h-3zM177 162h3v3h-3zM195 162h3v3h-3zM204 162h3v3h-3zM207 165h3v3h-3zM207 168h3v3h-3zM308 159h3v3h-3zM320 159h3v3h-3zM296 162h3v3h-3zM317 162h3v3h-3zM296 165h3v3h-3zM317 165h3v3h-3zM326 165h3v3h-3zM272 168h3v3h-3zM278 168h3v3h-3zM284 168h3v3h-3zM290 168h3v3h-3zM320 168h3v3h-3zM401 152h3v3h-3zM410 152h3v3h-3zM422 152h3v3h-3zM446 152h3v3h-3zM503 152h3v3h-3zM506 152h3v3h-3zM407 155h3v3h-3zM455 155h3v3h-3zM467 155h3v3h-3zM479 155h3v3h-3zM482 155h3v3h-3zM503 155h3v3h-3zM509 155h3v3h-3zM392 158h3v3h-3zM401 158h3v3h-3zM404 158h3v3h-3zM410 158h3v3h-3zM467 158h3v3h-3zM479 158h3v3h-3zM494 158h3v3h-3zM497 158h3v3h-3zM503 158h3v3h-3zM398 167h3v3h-3zM398 173h3v3h-3zM572 159h3v3h-3zM602 159h3v3h-3zM656 159h3v3h-3zM662 159h3v3h-3zM569 162h3v3h-3zM665 162h3v3h-3zM569 165h3v3h-3zM587 165h3v3h-3zM611 165h3v3h-3zM647 165h3v3h-3zM665 165h3v3h-3zM668 165h3v3h-3zM596 168h3v3h-3zM626 168h3v3h-3zM662 168h3v3h-3zM668 168h3v3h-3zM671 168h3v3h-3z"/><path fill="#fff" d="M78 27h3v3h-3zM69 30h3v3h-3zM63 33h3v3h-3zM39 36h3v3h-3zM102 36h3v3h-3zM428 24h3v3h-3zM476 27h3v3h-3zM78 121h3v3h-3zM87 127h3v3h-3zM120 127h3v3h-3zM39 130h3v3h-3z"/><path fill="#eee" d="M81 27h3v3h-3zM9 30h3v3h-3zM18 30h3v3h-3zM42 30h3v3h-3zM51 30h3v3h-3zM57 30h3v3h-3zM102 30h3v3h-3zM27 33h3v3h-3zM51 33h3v3h-3zM78 33h3v3h-3zM105 33h3v3h-3zM15 36h3v3h-3zM33 36h3v3h-3zM48 36h3v3h-3zM63 36h3v3h-3zM66 36h3v3h-3zM84 36h3v3h-3zM96 36h3v3h-3zM99 36h3v3h-3zM105 36h3v3h-3zM111 36h3v3h-3zM195 24h3v3h-3zM201 24h3v3h-3zM296 27h3v3h-3zM407 18h3v3h-3zM467 18h3v3h-3zM389 21h3v3h-3zM395 21h3v3h-3zM422 21h3v3h-3zM488 21h3v3h-3zM425 24h3v3h-3zM446 24h3v3h-3zM419 27h3v3h-3zM461 27h3v3h-3zM467 27h3v3h-3zM479 27h3v3h-3zM494 27h3v3h-3zM626 18h3v3h-3zM593 27h3v3h-3zM635 27h3v3h-3zM9 56h3v3h-3zM15 56h3v3h-3zM24 56h3v3h-3zM84 56h3v3h-3zM96 56h3v3h-3zM63 59h3v3h-3zM99 59h3v3h-3zM102 62h3v3h-3zM78 74h3v3h-3zM81 74h3v3h-3zM9 77h3v3h-3zM57 77h3v3h-3zM69 77h3v3h-3zM78 77h3v3h-3zM27 80h3v3h-3zM51 80h3v3h-3zM63 80h3v3h-3zM78 80h3v3h-3zM87 80h3v3h-3zM120 80h3v3h-3zM15 83h3v3h-3zM39 83h3v3h-3zM63 83h3v3h-3zM72 83h3v3h-3zM102 83h3v3h-3zM111 83h3v3h-3zM320 68h3v3h-3zM296 74h3v3h-3zM407 65h3v3h-3zM413 65h3v3h-3zM389 68h3v3h-3zM422 68h3v3h-3zM428 68h3v3h-3zM488 68h3v3h-3zM428 71h3v3h-3zM446 71h3v3h-3zM419 74h3v3h-3zM476 74h3v3h-3zM626 65h3v3h-3zM605 74h3v3h-3zM69 121h3v3h-3zM102 121h3v3h-3zM9 124h3v3h-3zM18 124h3v3h-3zM42 124h3v3h-3zM51 124h3v3h-3zM57 124h3v3h-3zM69 124h3v3h-3zM90 124h3v3h-3zM27 127h3v3h-3zM51 127h3v3h-3zM78 127h3v3h-3zM15 130h3v3h-3zM33 130h3v3h-3zM48 130h3v3h-3zM63 130h3v3h-3zM96 130h3v3h-3zM105 130h3v3h-3zM111 130h3v3h-3zM195 118h3v3h-3zM201 118h3v3h-3zM296 121h3v3h-3zM473 105h3v3h-3zM389 108h3v3h-3zM416 108h3v3h-3zM440 108h3v3h-3zM488 108h3v3h-3zM506 108h3v3h-3zM428 111h3v3h-3zM431 111h3v3h-3zM389 120h3v3h-3zM395 126h3v3h-3zM401 129h3v3h-3zM617 112h3v3h-3zM650 118h3v3h-3zM593 121h3v3h-3zM635 121h3v3h-3zM641 121h3v3h-3zM9 150h3v3h-3zM15 150h3v3h-3zM24 150h3v3h-3zM39 150h3v3h-3zM78 150h3v3h-3zM84 150h3v3h-3zM90 150h3v3h-3zM63 153h3v3h-3zM69 153h3v3h-3zM69 156h3v3h-3zM78 156h3v3h-3zM69 168h3v3h-3zM78 168h3v3h-3zM9 171h3v3h-3zM57 171h3v3h-3zM78 171h3v3h-3zM90 171h3v3h-3zM27 174h3v3h-3zM51 174h3v3h-3zM57 174h3v3h-3zM78 174h3v3h-3zM87 174h3v3h-3zM120 174h3v3h-3zM15 177h3v3h-3zM39 177h3v3h-3zM63 177h3v3h-3zM72 177h3v3h-3zM102 177h3v3h-3zM320 162h3v3h-3zM296 168h3v3h-3zM428 152h3v3h-3zM518 152h3v3h-3zM389 155h3v3h-3zM404 155h3v3h-3zM470 155h3v3h-3zM431 158h3v3h-3zM470 158h3v3h-3zM518 158h3v3h-3zM389 167h3v3h-3zM389 173h3v3h-3zM395 176h3v3h-3z"/><path fill="#edd" d="M90 27h3v3h-3zM21 36h3v3h-3zM183 27h3v3h-3zM503 21h3v3h-3zM593 24h3v3h-3zM623 27h3v3h-3zM96 74h3v3h-3zM63 121h3v3h-3zM108 121h3v3h-3zM21 130h3v3h-3zM183 121h3v3h-3zM593 118h3v3h-3zM656 121h3v3h-3z"/><path fill="#bcc" d="M93 27h3v3h-3zM21 30h3v3h-3zM24 33h3v3h-3zM117 36h3v3h-3zM326 18h3v3h-3zM623 18h3v3h-3zM638 21h3v3h-3zM27 77h3v3h-3zM45 77h3v3h-3zM108 80h3v3h-3zM314 65h3v3h-3zM416 71h3v3h-3zM464 74h3v3h-3zM21 124h3v3h-3zM24 127h3v3h-3zM326 112h3v3h-3zM491 111h3v3h-3zM644 112h3v3h-3zM650 112h3v3h-3zM638 115h3v3h-3zM111 168h3v3h-3zM27 171h3v3h-3zM45 171h3v3h-3zM69 171h3v3h-3zM314 159h3v3h-3zM407 158h3v3h-3z"/><path fill="#cdd" d="M102 27h3v3h-3zM45 33h3v3h-3zM308 27h3v3h-3zM440 24h3v3h-3zM506 27h3v3h-3zM575 18h3v3h-3zM575 21h3v3h-3zM575 24h3v3h-3zM590 24h3v3h-3zM69 74h3v3h-3zM117 83h3v3h-3zM189 68h3v3h-3zM302 74h3v3h-3zM314 74h3v3h-3zM416 68h3v3h-3zM413 74h3v3h-3zM473 74h3v3h-3zM626 71h3v3h-3zM45 127h3v3h-3zM308 121h3v3h-3zM575 112h3v3h-3zM575 115h3v3h-3zM575 118h3v3h-3zM590 118h3v3h-3zM117 177h3v3h-3zM189 162h3v3h-3zM302 168h3v3h-3zM314 168h3v3h-3z"/><path fill="#ffe" d="M105 27h3v3h-3zM320 21h3v3h-3zM413 18h3v3h-3zM605 27h3v3h-3zM102 130h3v3h-3zM320 115h3v3h-3z"/><path fill="#dcc" d="M30 30h3v3h-3zM293 27h3v3h-3zM476 18h3v3h-3zM413 21h3v3h-3zM395 24h3v3h-3zM434 24h3v3h-3zM581 18h3v3h-3zM623 24h3v3h-3zM632 24h3v3h-3zM569 27h3v3h-3zM63 74h3v3h-3zM413 71h3v3h-3zM572 65h3v3h-3zM572 68h3v3h-3zM572 71h3v3h-3zM30 124h3v3h-3zM81 130h3v3h-3zM293 121h3v3h-3zM446 111h3v3h-3zM581 112h3v3h-3zM632 118h3v3h-3zM569 121h3v3h-3z"/><path fill="#ccb" d="M48 30h3v3h-3zM204 24h3v3h-3zM305 18h3v3h-3zM443 21h3v3h-3zM593 18h3v3h-3zM605 18h3v3h-3zM617 24h3v3h-3zM9 74h3v3h-3zM57 74h3v3h-3zM9 83h3v3h-3zM57 83h3v3h-3zM413 68h3v3h-3zM437 68h3v3h-3zM398 71h3v3h-3zM581 68h3v3h-3zM81 121h3v3h-3zM48 124h3v3h-3zM204 118h3v3h-3zM305 112h3v3h-3zM434 105h3v3h-3zM410 108h3v3h-3zM593 112h3v3h-3zM668 115h3v3h-3zM9 168h3v3h-3zM9 177h3v3h-3zM491 152h3v3h-3zM581 162h3v3h-3zM605 162h3v3h-3zM641 162h3v3h-3zM617 168h3v3h-3z"/><path fill="#ddc" d="M105 30h3v3h-3zM192 27h3v3h-3zM428 18h3v3h-3zM494 18h3v3h-3zM497 21h3v3h-3zM413 24h3v3h-3zM473 24h3v3h-3zM572 18h3v3h-3zM572 21h3v3h-3zM572 24h3v3h-3zM584 27h3v3h-3zM15 74h3v3h-3zM18 80h3v3h-3zM42 80h3v3h-3zM90 83h3v3h-3zM180 68h3v3h-3zM171 74h3v3h-3zM269 65h3v3h-3zM281 65h3v3h-3zM494 71h3v3h-3zM581 71h3v3h-3zM90 127h3v3h-3zM90 130h3v3h-3zM192 121h3v3h-3zM572 112h3v3h-3zM572 115h3v3h-3zM572 118h3v3h-3zM584 121h3v3h-3zM15 168h3v3h-3zM18 174h3v3h-3zM42 174h3v3h-3zM66 174h3v3h-3zM99 174h3v3h-3zM180 162h3v3h-3zM171 168h3v3h-3zM269 159h3v3h-3zM281 159h3v3h-3zM581 165h3v3h-3zM605 165h3v3h-3zM641 165h3v3h-3z"/><path fill="#999" d="M108 30h3v3h-3zM84 33h3v3h-3zM171 18h3v3h-3zM183 18h3v3h-3zM186 18h3v3h-3zM171 21h3v3h-3zM174 21h3v3h-3zM183 21h3v3h-3zM186 21h3v3h-3zM192 21h3v3h-3zM207 21h3v3h-3zM171 24h3v3h-3zM174 24h3v3h-3zM183 24h3v3h-3zM186 24h3v3h-3zM210 24h3v3h-3zM293 18h3v3h-3zM296 18h3v3h-3zM302 18h3v3h-3zM305 21h3v3h-3zM314 21h3v3h-3zM323 21h3v3h-3zM305 24h3v3h-3zM308 24h3v3h-3zM311 24h3v3h-3zM320 24h3v3h-3zM497 18h3v3h-3zM398 21h3v3h-3zM458 21h3v3h-3zM461 21h3v3h-3zM449 24h3v3h-3zM458 24h3v3h-3zM464 24h3v3h-3zM476 24h3v3h-3zM479 24h3v3h-3zM599 18h3v3h-3zM608 18h3v3h-3zM632 18h3v3h-3zM635 18h3v3h-3zM611 21h3v3h-3zM632 21h3v3h-3zM177 65h3v3h-3zM186 65h3v3h-3zM192 65h3v3h-3zM174 68h3v3h-3zM186 68h3v3h-3zM186 71h3v3h-3zM293 65h3v3h-3zM302 65h3v3h-3zM302 68h3v3h-3zM278 71h3v3h-3zM290 71h3v3h-3zM302 71h3v3h-3zM305 71h3v3h-3zM308 71h3v3h-3zM311 71h3v3h-3zM314 71h3v3h-3zM320 71h3v3h-3zM275 74h3v3h-3zM287 74h3v3h-3zM404 65h3v3h-3zM410 65h3v3h-3zM416 65h3v3h-3zM437 65h3v3h-3zM464 65h3v3h-3zM470 65h3v3h-3zM497 65h3v3h-3zM503 65h3v3h-3zM398 68h3v3h-3zM425 68h3v3h-3zM455 68h3v3h-3zM461 68h3v3h-3zM476 68h3v3h-3zM494 68h3v3h-3zM437 71h3v3h-3zM455 71h3v3h-3zM476 71h3v3h-3zM497 71h3v3h-3zM599 68h3v3h-3zM623 68h3v3h-3zM635 68h3v3h-3zM620 71h3v3h-3zM114 124h3v3h-3zM171 112h3v3h-3zM183 112h3v3h-3zM186 112h3v3h-3zM171 115h3v3h-3zM174 115h3v3h-3zM183 115h3v3h-3zM186 115h3v3h-3zM192 115h3v3h-3zM207 115h3v3h-3zM171 118h3v3h-3zM174 118h3v3h-3zM183 118h3v3h-3zM186 118h3v3h-3zM210 118h3v3h-3zM293 112h3v3h-3zM296 112h3v3h-3zM302 112h3v3h-3zM305 115h3v3h-3zM314 115h3v3h-3zM323 115h3v3h-3zM305 118h3v3h-3zM308 118h3v3h-3zM311 118h3v3h-3zM320 118h3v3h-3zM392 105h3v3h-3zM398 105h3v3h-3zM404 105h3v3h-3zM413 105h3v3h-3zM419 105h3v3h-3zM443 105h3v3h-3zM449 105h3v3h-3zM461 105h3v3h-3zM467 105h3v3h-3zM482 105h3v3h-3zM488 105h3v3h-3zM515 105h3v3h-3zM401 108h3v3h-3zM455 108h3v3h-3zM515 108h3v3h-3zM425 111h3v3h-3zM482 111h3v3h-3zM506 111h3v3h-3zM509 111h3v3h-3zM389 123h3v3h-3zM398 123h3v3h-3zM389 126h3v3h-3zM398 129h3v3h-3zM599 112h3v3h-3zM620 112h3v3h-3zM632 112h3v3h-3zM635 112h3v3h-3zM641 112h3v3h-3zM668 112h3v3h-3zM671 112h3v3h-3zM632 115h3v3h-3zM656 115h3v3h-3zM620 118h3v3h-3zM623 118h3v3h-3zM111 174h3v3h-3zM177 159h3v3h-3zM186 159h3v3h-3zM192 159h3v3h-3zM174 162h3v3h-3zM186 162h3v3h-3zM186 165h3v3h-3zM293 159h3v3h-3zM302 159h3v3h-3zM302 162h3v3h-3zM278 165h3v3h-3zM290 165h3v3h-3zM302 165h3v3h-3zM305 165h3v3h-3zM308 165h3v3h-3zM311 165h3v3h-3zM314 165h3v3h-3zM320 165h3v3h-3zM275 168h3v3h-3zM287 168h3v3h-3zM398 152h3v3h-3zM404 152h3v3h-3zM425 152h3v3h-3zM449 152h3v3h-3zM470 152h3v3h-3zM473 152h3v3h-3zM509 152h3v3h-3zM512 152h3v3h-3zM488 155h3v3h-3zM497 155h3v3h-3zM512 155h3v3h-3zM398 158h3v3h-3zM422 158h3v3h-3zM425 158h3v3h-3zM449 158h3v3h-3zM473 158h3v3h-3zM476 158h3v3h-3zM500 158h3v3h-3zM515 158h3v3h-3zM392 176h3v3h-3zM575 159h3v3h-3zM653 159h3v3h-3zM665 159h3v3h-3zM668 159h3v3h-3zM671 159h3v3h-3zM599 162h3v3h-3zM635 162h3v3h-3zM656 162h3v3h-3zM653 165h3v3h-3z"/><path fill="#eed" d="M114 30h3v3h-3zM114 33h3v3h-3zM449 18h3v3h-3zM401 27h3v3h-3zM500 27h3v3h-3zM617 18h3v3h-3zM632 27h3v3h-3zM18 77h3v3h-3zM42 77h3v3h-3zM500 74h3v3h-3zM593 74h3v3h-3zM632 121h3v3h-3zM18 171h3v3h-3zM42 171h3v3h-3zM66 171h3v3h-3zM593 168h3v3h-3z"/><path fill="#dee" d="M12 33h3v3h-3zM60 33h3v3h-3zM108 33h3v3h-3zM186 27h3v3h-3zM467 24h3v3h-3zM485 27h3v3h-3zM626 27h3v3h-3zM42 56h3v3h-3zM48 56h3v3h-3zM51 56h3v3h-3zM69 56h3v3h-3zM9 62h3v3h-3zM84 62h3v3h-3zM51 77h3v3h-3zM395 68h3v3h-3zM425 71h3v3h-3zM12 127h3v3h-3zM60 127h3v3h-3zM186 121h3v3h-3zM497 108h3v3h-3zM497 111h3v3h-3zM659 121h3v3h-3zM42 150h3v3h-3zM48 150h3v3h-3zM51 150h3v3h-3zM75 150h3v3h-3zM81 150h3v3h-3zM36 153h3v3h-3zM102 153h3v3h-3zM9 156h3v3h-3zM102 159h3v3h-3zM51 171h3v3h-3zM437 152h3v3h-3zM437 155h3v3h-3zM452 155h3v3h-3z"/><path fill="#bbc" d="M21 33h3v3h-3zM189 24h3v3h-3zM431 18h3v3h-3zM440 21h3v3h-3zM497 27h3v3h-3zM614 18h3v3h-3zM638 18h3v3h-3zM635 24h3v3h-3zM201 65h3v3h-3zM440 68h3v3h-3zM401 71h3v3h-3zM500 71h3v3h-3zM21 127h3v3h-3zM189 118h3v3h-3zM638 112h3v3h-3zM614 118h3v3h-3zM635 118h3v3h-3zM674 121h3v3h-3zM84 168h3v3h-3zM201 159h3v3h-3z"/><path fill="#cbb" d="M36 33h3v3h-3zM180 24h3v3h-3zM192 24h3v3h-3zM204 27h3v3h-3zM299 27h3v3h-3zM389 18h3v3h-3zM464 21h3v3h-3zM389 24h3v3h-3zM389 27h3v3h-3zM629 18h3v3h-3zM105 77h3v3h-3zM9 80h3v3h-3zM57 80h3v3h-3zM30 83h3v3h-3zM204 71h3v3h-3zM305 65h3v3h-3zM461 65h3v3h-3zM488 65h3v3h-3zM488 74h3v3h-3zM617 68h3v3h-3zM617 71h3v3h-3zM93 124h3v3h-3zM36 127h3v3h-3zM180 118h3v3h-3zM192 118h3v3h-3zM204 121h3v3h-3zM299 121h3v3h-3zM494 108h3v3h-3zM494 111h3v3h-3zM605 112h3v3h-3zM629 112h3v3h-3zM617 118h3v3h-3zM9 174h3v3h-3zM30 177h3v3h-3zM204 165h3v3h-3zM305 159h3v3h-3zM410 155h3v3h-3zM629 162h3v3h-3z"/><path fill="#fee" d="M72 36h3v3h-3zM428 21h3v3h-3zM72 130h3v3h-3z"/><path fill="#766" d="M174 18h3v3h-3zM174 112h3v3h-3z"/><path fill="#99a" d="M177 18h3v3h-3zM302 21h3v3h-3zM302 24h3v3h-3zM275 27h3v3h-3zM287 27h3v3h-3zM494 21h3v3h-3zM635 21h3v3h-3zM620 24h3v3h-3zM117 77h3v3h-3zM177 112h3v3h-3zM302 115h3v3h-3zM302 118h3v3h-3zM275 121h3v3h-3zM287 121h3v3h-3zM635 115h3v3h-3zM659 115h3v3h-3zM626 118h3v3h-3zM117 171h3v3h-3zM392 155h3v3h-3zM443 158h3v3h-3z"/><path fill="#aa9" d="M192 18h3v3h-3zM311 18h3v3h-3zM476 21h3v3h-3zM623 21h3v3h-3zM168 65h3v3h-3zM168 68h3v3h-3zM168 71h3v3h-3zM299 71h3v3h-3zM452 71h3v3h-3zM192 112h3v3h-3zM311 112h3v3h-3zM509 105h3v3h-3zM464 108h3v3h-3zM168 159h3v3h-3zM168 162h3v3h-3zM168 165h3v3h-3zM299 165h3v3h-3zM467 152h3v3h-3zM422 155h3v3h-3zM446 155h3v3h-3zM461 155h3v3h-3zM491 158h3v3h-3z"/><path fill="#888" d="M198 18h3v3h-3zM210 18h3v3h-3zM198 21h3v3h-3zM198 24h3v3h-3zM275 18h3v3h-3zM287 18h3v3h-3zM308 21h3v3h-3zM272 24h3v3h-3zM284 24h3v3h-3zM452 24h3v3h-3zM584 18h3v3h-3zM611 18h3v3h-3zM584 21h3v3h-3zM587 21h3v3h-3zM596 21h3v3h-3zM608 24h3v3h-3zM171 65h3v3h-3zM198 65h3v3h-3zM171 68h3v3h-3zM201 68h3v3h-3zM207 68h3v3h-3zM272 65h3v3h-3zM284 65h3v3h-3zM323 65h3v3h-3zM272 71h3v3h-3zM284 71h3v3h-3zM611 65h3v3h-3zM587 68h3v3h-3zM608 68h3v3h-3zM611 68h3v3h-3zM198 112h3v3h-3zM210 112h3v3h-3zM198 115h3v3h-3zM198 118h3v3h-3zM275 112h3v3h-3zM287 112h3v3h-3zM308 115h3v3h-3zM272 118h3v3h-3zM284 118h3v3h-3zM494 105h3v3h-3zM422 108h3v3h-3zM503 108h3v3h-3zM416 111h3v3h-3zM440 111h3v3h-3zM476 111h3v3h-3zM584 112h3v3h-3zM611 112h3v3h-3zM656 112h3v3h-3zM584 115h3v3h-3zM587 115h3v3h-3zM596 115h3v3h-3zM611 115h3v3h-3zM626 115h3v3h-3zM611 118h3v3h-3zM171 159h3v3h-3zM198 159h3v3h-3zM171 162h3v3h-3zM201 162h3v3h-3zM207 162h3v3h-3zM272 159h3v3h-3zM284 159h3v3h-3zM323 159h3v3h-3zM272 165h3v3h-3zM284 165h3v3h-3zM413 152h3v3h-3zM434 152h3v3h-3zM455 152h3v3h-3zM461 152h3v3h-3zM482 152h3v3h-3zM515 152h3v3h-3zM398 155h3v3h-3zM425 155h3v3h-3zM449 155h3v3h-3zM494 155h3v3h-3zM515 155h3v3h-3zM389 158h3v3h-3zM419 158h3v3h-3zM434 158h3v3h-3zM587 162h3v3h-3zM611 162h3v3h-3zM647 162h3v3h-3zM659 162h3v3h-3zM671 162h3v3h-3zM620 165h3v3h-3zM623 165h3v3h-3z"/><path fill="#abb" d="M177 21h3v3h-3zM207 24h3v3h-3zM278 27h3v3h-3zM290 27h3v3h-3zM458 18h3v3h-3zM503 24h3v3h-3zM626 21h3v3h-3zM611 24h3v3h-3zM195 65h3v3h-3zM177 71h3v3h-3zM446 65h3v3h-3zM602 71h3v3h-3zM578 74h3v3h-3zM611 74h3v3h-3zM177 115h3v3h-3zM207 118h3v3h-3zM278 121h3v3h-3zM290 121h3v3h-3zM434 108h3v3h-3zM392 111h3v3h-3zM662 118h3v3h-3zM195 159h3v3h-3zM177 165h3v3h-3zM419 152h3v3h-3zM674 159h3v3h-3zM602 165h3v3h-3z"/><path fill="#889" d="M201 21h3v3h-3zM323 18h3v3h-3zM608 21h3v3h-3zM210 71h3v3h-3zM323 68h3v3h-3zM599 65h3v3h-3zM201 115h3v3h-3zM323 112h3v3h-3zM671 115h3v3h-3zM210 165h3v3h-3zM323 162h3v3h-3zM392 152h3v3h-3zM500 152h3v3h-3zM599 159h3v3h-3z"/><path fill="#baa" d="M204 21h3v3h-3zM75 77h3v3h-3zM96 77h3v3h-3zM422 74h3v3h-3zM596 65h3v3h-3zM629 71h3v3h-3zM204 115h3v3h-3zM416 105h3v3h-3zM440 105h3v3h-3zM500 108h3v3h-3zM668 118h3v3h-3zM75 171h3v3h-3zM389 152h3v3h-3zM416 152h3v3h-3zM416 158h3v3h-3zM440 158h3v3h-3zM596 159h3v3h-3zM629 165h3v3h-3zM671 165h3v3h-3zM665 168h3v3h-3z"/><path fill="#666" d="M210 21h3v3h-3zM299 18h3v3h-3zM174 65h3v3h-3zM596 71h3v3h-3zM210 115h3v3h-3zM299 112h3v3h-3zM608 115h3v3h-3zM623 115h3v3h-3zM174 159h3v3h-3zM596 165h3v3h-3z"/><path fill="#988" d="M272 18h3v3h-3zM284 18h3v3h-3zM192 68h3v3h-3zM174 71h3v3h-3zM272 112h3v3h-3zM284 112h3v3h-3zM398 108h3v3h-3zM389 111h3v3h-3zM192 162h3v3h-3zM174 165h3v3h-3zM440 152h3v3h-3zM659 159h3v3h-3z"/><path fill="#777" d="M299 21h3v3h-3zM275 24h3v3h-3zM287 24h3v3h-3zM596 24h3v3h-3zM198 68h3v3h-3zM275 65h3v3h-3zM287 65h3v3h-3zM299 68h3v3h-3zM311 68h3v3h-3zM275 71h3v3h-3zM287 71h3v3h-3zM584 65h3v3h-3zM599 71h3v3h-3zM299 115h3v3h-3zM275 118h3v3h-3zM287 118h3v3h-3zM449 111h3v3h-3zM647 115h3v3h-3zM596 118h3v3h-3zM656 118h3v3h-3zM659 118h3v3h-3zM198 162h3v3h-3zM275 159h3v3h-3zM287 159h3v3h-3zM299 162h3v3h-3zM311 162h3v3h-3zM275 165h3v3h-3zM287 165h3v3h-3zM488 152h3v3h-3zM443 155h3v3h-3zM455 158h3v3h-3zM461 158h3v3h-3zM482 158h3v3h-3zM488 158h3v3h-3zM506 158h3v3h-3zM584 159h3v3h-3zM608 159h3v3h-3zM644 159h3v3h-3zM599 165h3v3h-3z"/><path fill="#887" d="M311 21h3v3h-3zM599 24h3v3h-3zM311 115h3v3h-3zM599 118h3v3h-3zM608 118h3v3h-3zM659 165h3v3h-3z"/><path fill="#9aa" d="M314 24h3v3h-3zM213 68h3v3h-3zM278 65h3v3h-3zM290 65h3v3h-3zM111 127h3v3h-3zM314 118h3v3h-3zM213 162h3v3h-3zM278 159h3v3h-3zM290 159h3v3h-3zM476 152h3v3h-3zM494 152h3v3h-3zM626 159h3v3h-3zM662 165h3v3h-3z"/><path fill="#bba" d="M443 18h3v3h-3zM455 18h3v3h-3zM482 18h3v3h-3zM422 24h3v3h-3zM593 68h3v3h-3zM99 127h3v3h-3zM410 105h3v3h-3zM479 105h3v3h-3zM479 108h3v3h-3zM509 108h3v3h-3zM434 155h3v3h-3zM485 155h3v3h-3zM395 158h3v3h-3zM398 170h3v3h-3zM593 162h3v3h-3z"/><path fill="#dde" d="M446 21h3v3h-3zM78 56h3v3h-3zM105 56h3v3h-3zM12 59h3v3h-3zM15 59h3v3h-3zM24 59h3v3h-3zM57 59h3v3h-3zM30 65h3v3h-3zM57 65h3v3h-3zM96 65h3v3h-3zM102 74h3v3h-3zM96 83h3v3h-3zM105 83h3v3h-3zM201 71h3v3h-3zM452 74h3v3h-3zM626 74h3v3h-3zM635 74h3v3h-3zM105 124h3v3h-3zM413 108h3v3h-3zM461 108h3v3h-3zM674 118h3v3h-3zM57 150h3v3h-3zM99 150h3v3h-3zM12 153h3v3h-3zM15 153h3v3h-3zM24 153h3v3h-3zM51 156h3v3h-3zM57 156h3v3h-3zM60 156h3v3h-3zM30 159h3v3h-3zM63 159h3v3h-3zM102 168h3v3h-3zM105 177h3v3h-3zM201 165h3v3h-3zM428 158h3v3h-3zM401 170h3v3h-3zM635 168h3v3h-3z"/><path fill="#a99" d="M437 24h3v3h-3zM311 65h3v3h-3zM392 68h3v3h-3zM434 68h3v3h-3zM458 71h3v3h-3zM620 65h3v3h-3zM455 105h3v3h-3zM503 105h3v3h-3zM482 108h3v3h-3zM665 112h3v3h-3zM641 115h3v3h-3zM81 171h3v3h-3zM311 159h3v3h-3zM446 158h3v3h-3zM617 159h3v3h-3z"/><path fill="#ded" d="M434 27h3v3h-3zM467 65h3v3h-3z"/><path fill="#ace" d="M21 56h3v3h-3zM72 56h3v3h-3zM99 56h3v3h-3zM18 59h3v3h-3zM69 59h3v3h-3zM75 59h3v3h-3zM81 59h3v3h-3zM102 59h3v3h-3zM12 62h3v3h-3zM15 62h3v3h-3zM21 62h3v3h-3zM39 62h3v3h-3zM69 62h3v3h-3zM12 65h3v3h-3zM54 65h3v3h-3zM81 65h3v3h-3zM105 65h3v3h-3zM84 106h3v3h-3zM21 150h3v3h-3zM60 150h3v3h-3zM18 153h3v3h-3zM42 153h3v3h-3zM72 153h3v3h-3zM81 153h3v3h-3zM12 156h3v3h-3zM15 156h3v3h-3zM21 156h3v3h-3zM54 156h3v3h-3zM63 156h3v3h-3zM81 156h3v3h-3zM12 159h3v3h-3zM54 159h3v3h-3z"/><path fill="#cde" d="M27 56h3v3h-3zM39 56h3v3h-3zM45 56h3v3h-3zM54 56h3v3h-3zM60 56h3v3h-3zM81 56h3v3h-3zM93 56h3v3h-3zM108 56h3v3h-3zM36 59h3v3h-3zM66 59h3v3h-3zM84 59h3v3h-3zM33 62h3v3h-3zM15 65h3v3h-3zM24 65h3v3h-3zM36 65h3v3h-3zM63 65h3v3h-3zM69 65h3v3h-3zM90 65h3v3h-3zM27 150h3v3h-3zM45 150h3v3h-3zM54 150h3v3h-3zM66 150h3v3h-3zM72 150h3v3h-3zM105 150h3v3h-3zM45 153h3v3h-3zM51 153h3v3h-3zM78 153h3v3h-3zM96 153h3v3h-3zM33 156h3v3h-3zM48 156h3v3h-3zM102 156h3v3h-3zM15 159h3v3h-3zM24 159h3v3h-3zM42 159h3v3h-3zM69 159h3v3h-3zM90 159h3v3h-3zM99 159h3v3h-3zM108 159h3v3h-3z"/><path fill="#bde" d="M75 56h3v3h-3zM102 56h3v3h-3zM90 59h3v3h-3zM18 65h3v3h-3zM93 150h3v3h-3zM87 153h3v3h-3zM87 156h3v3h-3zM18 159h3v3h-3z"/><path fill="#cce" d="M30 59h3v3h-3zM78 65h3v3h-3zM30 153h3v3h-3zM84 153h3v3h-3zM93 153h3v3h-3zM45 156h3v3h-3zM57 159h3v3h-3zM78 159h3v3h-3z"/><path fill="#9ae" d="M78 59h3v3h-3zM36 62h3v3h-3z"/><path fill="#7ae" d="M18 62h3v3h-3zM90 109h3v3h-3zM18 156h3v3h-3zM96 156h3v3h-3z"/><path fill="#bbe" d="M30 62h3v3h-3zM30 156h3v3h-3z"/><path fill="#cee" d="M90 62h3v3h-3zM36 159h3v3h-3z"/><path fill="#899" d="M84 80h3v3h-3zM171 71h3v3h-3zM314 68h3v3h-3zM458 68h3v3h-3zM479 71h3v3h-3zM635 65h3v3h-3zM437 111h3v3h-3zM171 165h3v3h-3zM314 162h3v3h-3zM443 152h3v3h-3zM401 155h3v3h-3zM476 155h3v3h-3zM635 159h3v3h-3zM656 165h3v3h-3z"/><path fill="#998" d="M183 65h3v3h-3zM183 68h3v3h-3zM183 71h3v3h-3zM305 68h3v3h-3zM464 71h3v3h-3zM608 65h3v3h-3zM632 65h3v3h-3zM632 68h3v3h-3zM425 108h3v3h-3zM620 115h3v3h-3zM183 159h3v3h-3zM183 162h3v3h-3zM183 165h3v3h-3zM305 162h3v3h-3zM440 155h3v3h-3zM632 159h3v3h-3zM632 162h3v3h-3z"/><path fill="#878" d="M210 65h3v3h-3zM596 68h3v3h-3zM608 71h3v3h-3zM210 159h3v3h-3zM596 162h3v3h-3z"/><path fill="#555" d="M210 68h3v3h-3zM299 65h3v3h-3zM210 162h3v3h-3zM299 159h3v3h-3zM620 159h3v3h-3z"/><path fill="#877" d="M198 71h3v3h-3zM647 112h3v3h-3zM198 165h3v3h-3z"/><path fill="#898" d="M296 65h3v3h-3zM296 159h3v3h-3z"/><path fill="#778" d="M308 68h3v3h-3zM485 108h3v3h-3zM308 162h3v3h-3z"/><path fill="#cdc" d="M440 65h3v3h-3z"/><path fill="#788" d="M584 68h3v3h-3zM476 105h3v3h-3zM584 162h3v3h-3zM608 162h3v3h-3zM644 162h3v3h-3z"/><path fill="#adf" d="M81 106h3v3h-3z"/><path fill="#cef" d="M48 109h3v3h-3zM108 109h3v3h-3z"/><path fill="#abf" d="M45 112h3v3h-3z"/><path fill="#efe" d="M404 108h3v3h-3z"/><path fill="#79e" d="M99 153h3v3h-3z"/><path fill="#ede" d="M84 156h3v3h-3z"/><path fill="#dce" d="M93 156h3v3h-3z"/><path fill="#9ce" d="M87 159h3v3h-3z"/><path fill="#556" d="M623 159h3v3h-3z"/></svg>
</div><!--/rows-->
<div class="a" style="left:227px;top:460px;width:1px;height:189px;background:#e8e8e8"></div>
<div class="a" style="left:1770px;top:423px;width:1px;height:226px;background:#e8e8e8"></div>

<!-- pagination -->
<div class="a" style="left:1502px;top:661px;width:52px;height:27px;border:1px solid #dcdfe6;border-radius:3px;background:#f4f4f5;color:#c0c4cc;font-size:12px;line-height:25px;text-align:center">上一页</div>
<div class="a" style="left:1565px;top:661px;width:32px;height:27px;border-radius:3px;background:#2d8cf0;color:#fff;font-size:12px;font-weight:bold;line-height:27px;text-align:center">1</div>
<div class="a" style="left:1609px;top:661px;width:52px;height:27px;border:1px solid #dcdfe6;border-radius:3px;background:#f4f4f5;color:#c0c4cc;font-size:12px;line-height:25px;text-align:center">下一页</div>
<div class="a" style="left:1681px;top:662px;width:79px;height:26px;border:1px solid #dcdfe6;border-radius:3px;background:#fff;color:#555;font-size:12px;line-height:24px;padding-left:13px">30条/页<span class="dd" style="right:11px;top:7px;width:6px;height:6px"></span></div>

<!-- tooltip + magnifier -->
<div class="a" style="left:182px;top:334px;width:200px;height:51px;background:#fff;border-radius:4px;box-shadow:0 1px 6px rgba(0,0,0,.12)"></div>
<div class="a" style="left:272px;top:380px;width:10px;height:10px;background:#fff;transform:rotate(45deg);box-shadow:2px 2px 3px rgba(0,0,0,.06)"></div>
<div class="a" style="left:198px;top:342px;font-size:12px;line-height:18px;color:#5c5f66;width:175px">您可导出当前查询条件数据，每次导出数量不超过1万条</div>
<div class="a red" style="left:379px;top:332px;width:3px;height:36px;border-width:0;background:#e8161f"></div>
<div class="a" style="left:182px;top:376px;width:208px;height:77px;border-radius:50%;border:3.5px solid #b4b4b4;background:#fff;box-shadow:0 0 0 1px #5f5f5f, inset 0 2px 5px rgba(0,0,0,.10)"></div>
<div class="a" style="left:268px;top:383px;width:0;height:0;border-left:10px solid transparent;border-right:10px solid transparent;border-top:10px solid #f0f0f0"></div>
<svg class="a" style="left:190px;top:403px" width="21" height="15" viewBox="0 0 21 15"><path d="M5 15a5 5 0 0 1-1-9.9A6.5 6.5 0 0 1 16.5 4.5 5.2 5.2 0 0 1 16 15z" fill="#2d7cf6"/><path d="M10.5 5v6M7.5 8.5l3 3 3-3" fill="none" stroke="#fff" stroke-width="1.8"/></svg>
<div class="a" style="left:217px;top:401px;font-size:19px;line-height:24px;color:#3d74f3;white-space:nowrap">导出当前查询结果</div>
<div class="a" style="left:198px;top:426px;width:171px;height:2px;background:#2d7cf6"></div>

<!-- annotations -->
<div class="badge" style="left:458px;top:184px">1</div>
<div class="ann" style="left:494px;top:193px">点击此处可以直接查询到，对应的超时订单</div>
<div class="badge" style="left:504px;top:369px">2</div>
<div class="ann" style="left:545px;top:374px">可以自定义输入条件筛选订单，查询，导出</div>
<div class="ann" style="left:544px;top:404px">单次导出上限不超过一万条</div>

<!-- footer -->
<div class="a" style="left:216px;top:722px;width:1584px;height:59px;background:#fff;box-shadow:0 -2px 4px rgba(0,0,0,.07)"></div>
<div class="a" style="left:222px;top:738px;width:104px;height:40px;border:1px solid #dcdfe6;border-radius:4px;font-size:14px;line-height:36px;color:#555;padding-left:12px">快捷勾选<span class="a" style="left:77px;top:16px;width:0;height:0;border-left:4px solid transparent;border-right:4px solid transparent;border-bottom:5px solid #444"></span></div>
<div class="btn" style="left:872px;width:110px;background:#2b8ef0">批量添加备注</div>
<div class="btn" style="left:1005px;width:124px;background:#0fb27a">批量设置已签收</div>
<div class="btn" style="left:1153px;width:138px;background:#eb4416">批量标记为已处理</div>
<div class="btn" style="left:1315px;width:123px;background:#fff;border:1px solid #dcdfe6;color:#555;font-weight:normal;line-height:38px">批量复制运单号</div>
<div class="a" style="left:1748px;top:703px;width:36px;height:36px;background:#7a7a7a;color:#fff;font-weight:bold;font-size:14px;line-height:18px;text-align:center;padding-top:0px">新手<br>引导</div>
<div class="a" style="left:1748px;top:748px;width:36px;height:32px;background:#7a7a7a"><div class="a" style="left:12px;top:13px;width:11px;height:11px;border-left:2.5px solid #fff;border-top:2.5px solid #fff;transform:rotate(45deg)"></div></div>
<!-- h scrollbar -->
<div class="a" style="left:1px;top:783px;width:0;height:0;border-top:3px solid transparent;border-bottom:3px solid transparent;border-right:4px solid #505050;z-index:2"></div>
<div class="a" style="left:0;top:781px;width:1803px;height:6px;background:#f0f0f0"></div>
<div class="a" style="left:9px;top:781px;width:891px;height:6px;background:#cdcdcd"></div>
</body>
</html>
